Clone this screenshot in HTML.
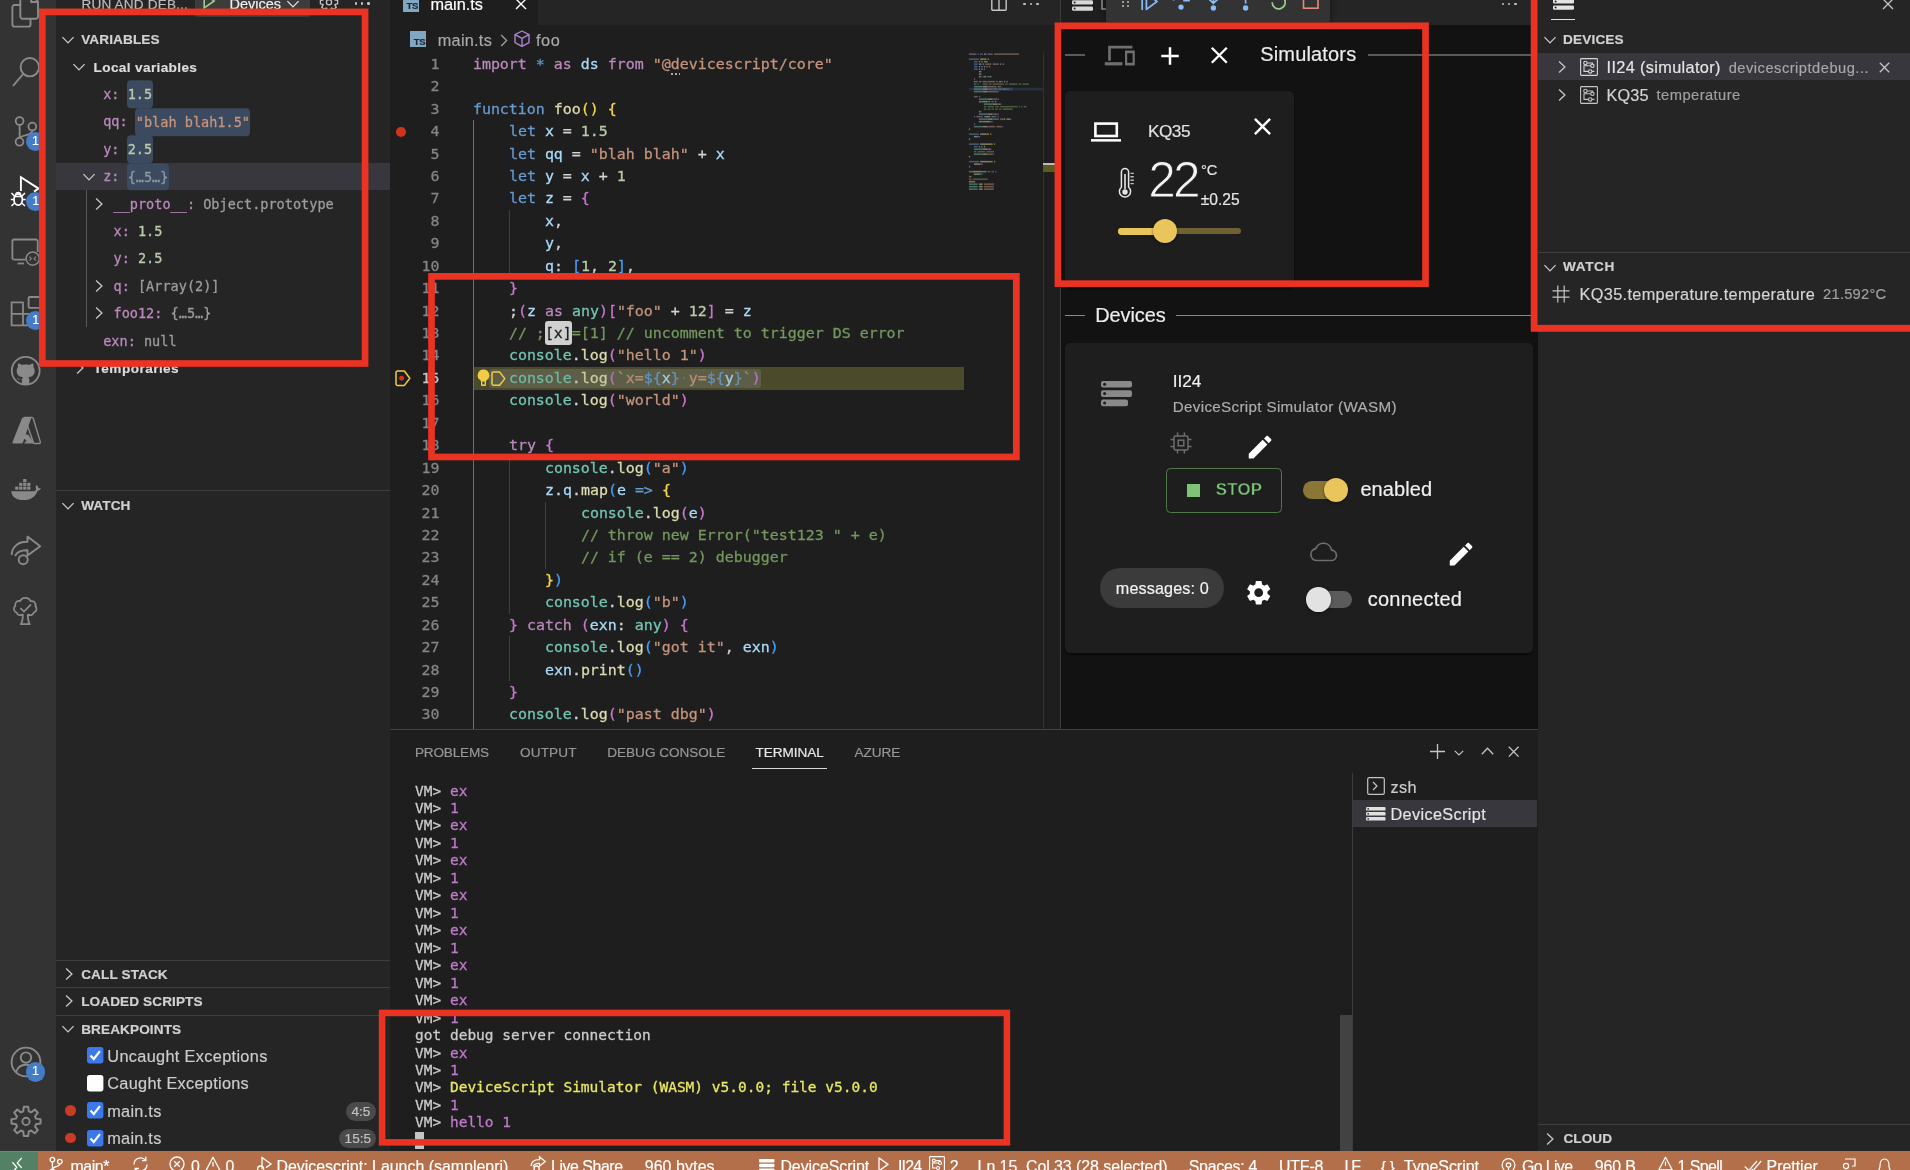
<!DOCTYPE html>
<html lang="en">
<head>
<meta charset="utf-8">
<title>DeviceScript - Visual Studio Code</title>
<style>
*{box-sizing:border-box;margin:0;padding:0}
html,body{width:1910px;height:1170px;overflow:hidden;background:#1e1e1e}
body{position:relative;font-family:"Liberation Sans",sans-serif;color:#ccc;font-size:16px;-webkit-text-stroke:.18px}
.abs{position:absolute}
.mono{font-family:"DejaVu Sans Mono","Liberation Mono",monospace;-webkit-text-stroke:.28px}
#activity{left:0;top:0;width:56px;height:1152px;background:#333333}
#sidebar{left:56px;top:0;width:334px;height:1152px;background:#252526}
#editor{left:390px;top:0;width:670px;height:729px;background:#1e1e1e}
#sim{left:1060px;top:0;width:478px;height:729px;background:#121212}
#right{left:1538px;top:0;width:372px;height:1152px;background:#252526}
#panel{left:390px;top:729px;width:1148px;height:423px;background:#1e1e1e;border-top:1px solid #414141}
#status{left:0;top:1151.4px;width:1910px;height:28px;background:#b36f4a;color:#fff;font-size:15.6px}
svg{display:block;overflow:visible}
.t{position:absolute;white-space:pre;line-height:1}
/* sidebar */
.hdr{font-weight:bold;font-size:13.6px;color:#d0d0d0;letter-spacing:.1px}
.sep{position:absolute;left:0;height:1px;background:#3e3e3f;width:334px}
.tv{font-size:13.55px;color:#bc89bd}
</style>
</head>
<body>
<div id="root" class="abs" style="left:0;top:0;width:1910px;height:1170px;overflow:hidden;will-change:transform;background:#1e1e1e">
<div id="activity" class="abs"><svg class="abs" style="left:0;top:0" width="56" height="1152" viewBox="0 0 56 1152" ><path d="M20.3,-6 V16.6 a2.2,2.2 0 0 0 2.2,2.2 H35.8 a2.2,2.2 0 0 0 2.2,-2.2 V1.5 L31.5,-5" fill="none" stroke="#8a8a8a" stroke-width="1.9"/><path d="M31.2,-5 V2 H38" fill="none" stroke="#8a8a8a" stroke-width="1.9"/><path d="M20.3,5 H14.6 a2.2,2.2 0 0 0 -2.2,2.2 V24.4 a2.2,2.2 0 0 0 2.2,2.2 H28.3 a2.2,2.2 0 0 0 2.2,-2.2 V18.8" fill="none" stroke="#8a8a8a" stroke-width="1.9"/><circle cx="29.8" cy="67.2" r="9.2" fill="none" stroke="#8a8a8a" stroke-width="1.9"/><path d="M23.2,74 L13,85.8" stroke="#8a8a8a" stroke-width="1.9" fill="none"/><circle cx="19.6" cy="121" r="3.9" fill="none" stroke="#8a8a8a" stroke-width="1.8"/><circle cx="32.3" cy="126.6" r="3.9" fill="none" stroke="#8a8a8a" stroke-width="1.8"/><circle cx="19.5" cy="141.8" r="3.9" fill="none" stroke="#8a8a8a" stroke-width="1.8"/><path d="M19.6,125 V137.8 M32.3,130.6 C32.3,136 24,134 19.8,137.6" fill="none" stroke="#8a8a8a" stroke-width="1.8"/><path d="M20.9,191 V177.3 L38.6,188.6 L34,191.6" fill="none" stroke="#ffffff" stroke-width="1.9"/><ellipse cx="18.2" cy="199.6" rx="4.2" ry="5.6" fill="none" stroke="#ffffff" stroke-width="1.8"/><path d="M14.6,196.6 H21.8 M14,199.6 H10.8 M22.4,199.6 H25.6 M14.4,196 L11.4,193 M22,196 L25,193 M14.4,203.2 L11.4,206 M22,203.2 L25,206 M15.6,194.2 a2.8,2.8 0 0 1 5.2,0" fill="none" stroke="#ffffff" stroke-width="1.5"/><path d="M25.5,259.7 H14.2 a1.8,1.8 0 0 1 -1.8,-1.8 V241.3 a1.8,1.8 0 0 1 1.8,-1.8 H35.9 a1.8,1.8 0 0 1 1.8,1.8 V252" fill="none" stroke="#8a8a8a" stroke-width="1.8"/><path d="M17.6,263.5 H24" stroke="#8a8a8a" stroke-width="1.8"/><circle cx="32.7" cy="258.6" r="6.6" fill="none" stroke="#8a8a8a" stroke-width="1.5"/><path d="M29.4,256.6 L31.4,258.6 L29.4,260.6 M36,256.6 L34,258.6 L36,260.6" fill="none" stroke="#8a8a8a" stroke-width="1.1"/><path d="M11.6,302.4 H23 V325.4 H11.6 Z M11.6,313.9 H34.6 V325.4 H23 M23,313.9" fill="none" stroke="#8a8a8a" stroke-width="1.8" stroke-linejoin="round"/><rect x="28.6" y="297" width="11.6" height="10.8" rx="1" fill="none" stroke="#8a8a8a" stroke-width="1.8"/><circle cx="25.7" cy="370.8" r="13.9" fill="none" stroke="#8a8a8a" stroke-width="1.8"/><path d="M21.9,384 v-4.2 c-3.6,0.9 -4.5,-1.6 -5,-2.4 c1,0.2 1.9,1.6 2.6,2 c1,0.5 2,0.3 2.6,-0.1 c0.1,-0.9 0.5,-1.5 1,-1.9 c-3.5,-0.5 -6.4,-2 -6.4,-6.6 c0,-1.5 0.5,-2.8 1.4,-3.8 c-0.2,-0.5 -0.6,-1.9 0.1,-3.6 c1.4,0 2.9,0.9 3.8,1.6 c1.2,-0.4 2.4,-0.5 3.7,-0.5 c1.300,0 2.500,0.1 3.700,0.500 c0.900,-0.700 2.400,-1.600 3.800,-1.600 c0.700,1.700 0.300,3.100 0.100,3.600 c0.900,1 1.400,2.300 1.400,3.800 c0,4.600 -2.900,6.100 -6.400,6.600 c0.600,0.500 1.100,1.500 1.100,3 v3.600 Z" fill="#8a8a8a"/><path d="M23.4,417.4 H31.4 L23,442.4 a1.6,1.6 0 0 1 -1.500,1.100 H13.600 a1.2,1.2 0 0 1 -1.100,-1.600 L21.900,418.500 a1.600,1.600 0 0 1 1.500,-1.100 Z" fill="#8a8a8a"/><path d="M31.8,417.4 H24.6 L33.4,442.4 a1.600,1.600 0 0 0 1.500,1.100 H39.2 a1.200,1.200 0 0 0 1.100,-1.600 L33.300,418.500 a1.600,1.600 0 0 0 -1.500,-1.100 Z" fill="none" stroke="#8a8a8a" stroke-width="1.4"/><path d="M28,434.400 H19.500 L26.500,440.800 L23.800,443.500 H34.500 Z" fill="#8a8a8a"/><path d="M10.8,491.200 H33.200 c1.600,0 2.600,-0.900 3,-2.300 c-0.800,-1.100 -0.700,-2.700 0.300,-3.900 c1.300,0.900 1.900,2.100 2,3.300 c0.900,-0.300 1.800,-0.200 2.500,0.300 c-0.700,1.300 -2,2 -3.400,2.100 c-2,5.700 -6.500,9.400 -14,9.400 c-7.500,0 -11.900,-3.500 -12.400,-8.900 Z" fill="#8a8a8a"/><rect x="15.2" y="486.6" width="3.200" height="3.100" fill="#8a8a8a"/><rect x="19.2" y="486.6" width="3.200" height="3.100" fill="#8a8a8a"/><rect x="23.2" y="486.6" width="3.200" height="3.100" fill="#8a8a8a"/><rect x="27.2" y="486.6" width="3.200" height="3.100" fill="#8a8a8a"/><rect x="19.2" y="482.8" width="3.200" height="3.100" fill="#8a8a8a"/><rect x="23.2" y="482.8" width="3.200" height="3.100" fill="#8a8a8a"/><rect x="27.2" y="482.8" width="3.200" height="3.100" fill="#8a8a8a"/><rect x="23.2" y="479" width="3.200" height="3.100" fill="#8a8a8a"/><rect x="23.600" y="479" width="2.400" height="2.600" fill="#8a8a8a"/><path d="M11.6,555 C12,546 19,541.500 27.500,541.800 V536.600 L40.200,546.200 L27.500,555.600 V550.200 C21.500,550 17.500,551 15,556" fill="none" stroke="#8a8a8a" stroke-width="1.9" stroke-linejoin="round"/><circle cx="23.200" cy="559.700" r="4.500" fill="none" stroke="#8a8a8a" stroke-width="1.900"/><path d="M22.800,614.600 c-2.200,1.200 -5.400,0.600 -6.200,-2 c-2.800,-1 -3.800,-4.600 -1.400,-6.800 c-0.600,-3.200 2.400,-5.600 5,-4.600 c1.400,-4.400 8.600,-4.400 10.400,0 c3,-0.800 5.600,1.800 4.800,4.800 c2.200,2.200 1.200,5.800 -1.600,6.600 c-0.800,2.600 -3.800,3.200 -6,2 c0,4 0.400,7.400 2,9.600 H20.800 c1.600,-2.200 2,-5.600 2,-9.600 Z" fill="none" stroke="#8a8a8a" stroke-width="1.8" stroke-linejoin="round"/><path d="M20.400,608.200 L24,611.600 L31,604.400" fill="none" stroke="#8a8a8a" stroke-width="1.800"/><circle cx="26" cy="1062" r="14.400" fill="none" stroke="#8a8a8a" stroke-width="1.900"/><circle cx="26" cy="1057.600" r="5.200" fill="none" stroke="#8a8a8a" stroke-width="1.900"/><path d="M16,1072.400 c1.600,-5.600 6,-7.600 10,-7.600 c4,0 8.400,2 10,7.600" fill="none" stroke="#8a8a8a" stroke-width="1.900"/><path d="M23.80,1106.87 L28.20,1106.87 L28.77,1111.38 L31.13,1112.35 L34.72,1109.57 L37.83,1112.68 L35.05,1116.27 L36.02,1118.63 L40.53,1119.20 L40.53,1123.60 L36.02,1124.17 L35.05,1126.53 L37.83,1130.12 L34.72,1133.23 L31.13,1130.45 L28.77,1131.42 L28.20,1135.93 L23.80,1135.93 L23.23,1131.42 L20.87,1130.45 L17.28,1133.23 L14.17,1130.12 L16.95,1126.53 L15.98,1124.17 L11.47,1123.60 L11.47,1119.20 L15.98,1118.63 L16.95,1116.27 L14.17,1112.68 L17.28,1109.57 L20.87,1112.35 L23.23,1111.38 Z" fill="none" stroke="#8a8a8a" stroke-width="2" stroke-linejoin="round"/><circle cx="26" cy="1121.4" r="3.600" fill="none" stroke="#8a8a8a" stroke-width="1.900"/></svg>
<div class="abs" style="left:25.900000000000002px;top:132.0px;width:19.4px;height:19.4px;border-radius:50%;background:#447cc8;color:#fff;font-size:12.500px;font-weight:normal;line-height:19.4px;text-align:center;z-index:2">1</div>
<div class="abs" style="left:26.000000000000004px;top:191.5px;width:19.4px;height:19.4px;border-radius:50%;background:#447cc8;color:#fff;font-size:12.500px;font-weight:normal;line-height:19.4px;text-align:center;z-index:2">1</div>
<div class="abs" style="left:26.000000000000004px;top:311.1px;width:19.4px;height:19.4px;border-radius:50%;background:#447cc8;color:#fff;font-size:12.500px;font-weight:normal;line-height:19.4px;text-align:center;z-index:2">1</div>
<div class="abs" style="left:25.900000000000002px;top:1062.3px;width:19.4px;height:19.4px;border-radius:50%;background:#447cc8;color:#fff;font-size:12.500px;font-weight:normal;line-height:19.4px;text-align:center;z-index:2">1</div></div>
<div id="sidebar" class="abs"><div class="t " style="left:25.5px;top:4.5px;transform:translateY(-50%);font-size:13.600px;color:#bbbbbb;letter-spacing:.16px">RUN AND DEB...</div>
<div class="abs" style="left:138.8px;top:-10px;width:114.8px;height:27.4px;background:#3c3c3c;border-radius:2px"></div>
<svg class="abs" style="left:147px;top:-6px" width="13" height="15" viewBox="0 0 13 15"><path d="M1.2,0 L11.2,7 L1.2,14 Z" fill="none" stroke="#99cf8c" stroke-width="1.6"/></svg>
<div class="t " style="left:173.5px;top:3.5px;transform:translateY(-50%);font-size:14.500px;color:#f0f0f0">Devices</div>
<svg class="abs" style="left:229.60000000000002px;top:-1.4px" width="14" height="10" viewBox="-7 -5 14 10"><path d="M-5.6,-2.9 L0,2.9 L5.6,-2.9" fill="none" stroke="#e0e0e0" stroke-width="1.35"/></svg>
<svg class="abs" style="left:262.5px;top:-8px" width="20" height="20" viewBox="0 0 20 20"><path d="M8.25,1.58 L11.75,1.58 L12.13,4.17 L12.76,4.42 L14.86,2.87 L17.33,5.34 L15.78,7.44 L16.03,8.07 L18.62,8.45 L18.62,11.95 L16.03,12.33 L15.78,12.96 L17.33,15.06 L14.86,17.53 L12.76,15.98 L12.13,16.23 L11.75,18.82 L8.25,18.82 L7.87,16.23 L7.24,15.98 L5.14,17.53 L2.67,15.06 L4.22,12.96 L3.97,12.33 L1.38,11.95 L1.38,8.45 L3.97,8.07 L4.22,7.44 L2.67,5.34 L5.14,2.87 L7.24,4.42 L7.87,4.17 Z" fill="none" stroke="#c5c5c5" stroke-width="1.3" stroke-linejoin="round"/><circle cx="10" cy="10.2" r="2.6" fill="none" stroke="#c5c5c5" stroke-width="1.3"/></svg>
<div class="abs" style="left:298.5px;top:2.2px;width:2.4px;height:2.4px;border-radius:50%;background:#c5c5c5"></div>
<div class="abs" style="left:304.9px;top:2.2px;width:2.4px;height:2.4px;border-radius:50%;background:#c5c5c5"></div>
<div class="abs" style="left:311.3px;top:2.2px;width:2.4px;height:2.4px;border-radius:50%;background:#c5c5c5"></div>
<svg class="abs" style="left:5.400000000000006px;top:34.8px" width="14" height="10" viewBox="-7 -5 14 10"><path d="M-5.6,-2.9 L0,2.9 L5.6,-2.9" fill="none" stroke="#c5c5c5" stroke-width="1.35"/></svg>
<div class="t hdr" style="left:25.2px;top:40.2px;transform:translateY(-50%);">VARIABLES</div>
<svg class="abs" style="left:16px;top:62px" width="14" height="10" viewBox="-7 -5 14 10"><path d="M-5.6,-2.9 L0,2.9 L5.6,-2.9" fill="none" stroke="#c5c5c5" stroke-width="1.35"/></svg>
<div class="t hdr" style="left:37.6px;top:67.5px;transform:translateY(-50%);color:#dcdcdc;letter-spacing:.36px">Local variables</div>
<div class="abs" style="left:0;top:163px;width:334px;height:26.8px;background:#37373d"></div>
<div class="abs" style="left:30.200000000000003px;top:189.8px;width:1px;height:137.4px;background:#5a5a5a"></div>
<div class="t mono tv" style="left:47.2px;top:94.9px;transform:translateY(-50%);"><span>x:</span> <span style="color:#bacdab;background:#3b4a5e;border-radius:4px;padding:5.6px 0.4px 6.2px 0.4px;margin:0 -0.4px">1.5</span></div>
<div class="t mono tv" style="left:47.2px;top:122.4px;transform:translateY(-50%);"><span>qq:</span> <span style="color:#c5947c;background:#3b4a5e;border-radius:4px;padding:5.6px 0.4px 6.2px 0.4px;margin:0 -0.4px">"blah blah1.5"</span></div>
<div class="t mono tv" style="left:47.2px;top:149.9px;transform:translateY(-50%);"><span>y:</span> <span style="color:#bacdab;background:#3b4a5e;border-radius:4px;padding:5.6px 0.4px 6.2px 0.4px;margin:0 -0.4px">2.5</span></div>
<svg class="abs" style="left:26px;top:171.9px" width="14" height="10" viewBox="-7 -5 14 10"><path d="M-5.6,-2.9 L0,2.9 L5.6,-2.9" fill="none" stroke="#c5c5c5" stroke-width="1.35"/></svg>
<div class="t mono tv" style="left:47.2px;top:177.2px;transform:translateY(-50%);"><span>z:</span> <span style="color:#8f98a3;background:#3b4a5e;border-radius:4px;padding:5.6px 0.4px 6.2px 0.4px;margin:0 -0.4px">{…5…}</span></div>
<svg class="abs" style="left:38.3px;top:196.8px" width="10" height="14" viewBox="-5 -7 10 14"><path d="M-2.9,-5.6 L2.9,0 L-2.9,5.6" fill="none" stroke="#c5c5c5" stroke-width="1.35"/></svg>
<div class="t mono tv" style="left:57.5px;top:204.7px;transform:translateY(-50%);"><span>__proto__:</span> <span style="color:#9d9d9d;">Object.prototype</span></div>
<div class="t mono tv" style="left:57.5px;top:231.9px;transform:translateY(-50%);"><span>x:</span> <span style="color:#bacdab;">1.5</span></div>
<div class="t mono tv" style="left:57.5px;top:259.4px;transform:translateY(-50%);"><span>y:</span> <span style="color:#bacdab;">2.5</span></div>
<svg class="abs" style="left:38.3px;top:279px" width="10" height="14" viewBox="-5 -7 10 14"><path d="M-2.9,-5.6 L2.9,0 L-2.9,5.6" fill="none" stroke="#c5c5c5" stroke-width="1.35"/></svg>
<div class="t mono tv" style="left:57.5px;top:286.9px;transform:translateY(-50%);"><span>q:</span> <span style="color:#9d9d9d;">[Array(2)]</span></div>
<svg class="abs" style="left:38.3px;top:306.3px" width="10" height="14" viewBox="-5 -7 10 14"><path d="M-2.9,-5.6 L2.9,0 L-2.9,5.6" fill="none" stroke="#c5c5c5" stroke-width="1.35"/></svg>
<div class="t mono tv" style="left:57.5px;top:314.2px;transform:translateY(-50%);"><span>foo12:</span> <span style="color:#9d9d9d;">{…5…}</span></div>
<div class="t mono tv" style="left:47.2px;top:341.6px;transform:translateY(-50%);"><span>exn:</span> <span style="color:#9d9d9d;">null</span></div>
<svg class="abs" style="left:19.299999999999997px;top:361px" width="10" height="14" viewBox="-5 -7 10 14"><path d="M-2.9,-5.6 L2.9,0 L-2.9,5.6" fill="none" stroke="#c5c5c5" stroke-width="1.35"/></svg>
<div class="t hdr" style="left:37.6px;top:368.9px;transform:translateY(-50%);color:#dcdcdc;letter-spacing:.45px">Temporaries</div>
<div class="sep" style="top:490px"></div>
<svg class="abs" style="left:5.400000000000006px;top:500.6px" width="14" height="10" viewBox="-7 -5 14 10"><path d="M-5.6,-2.9 L0,2.9 L5.6,-2.9" fill="none" stroke="#c5c5c5" stroke-width="1.35"/></svg>
<div class="t hdr" style="left:25.2px;top:506.1px;transform:translateY(-50%);">WATCH</div>
<div class="sep" style="top:960px"></div>
<svg class="abs" style="left:7.799999999999997px;top:967.2px" width="10" height="14" viewBox="-5 -7 10 14"><path d="M-2.9,-5.6 L2.9,0 L-2.9,5.6" fill="none" stroke="#c5c5c5" stroke-width="1.35"/></svg>
<div class="t hdr" style="left:25.2px;top:975.1px;transform:translateY(-50%);">CALL STACK</div>
<div class="sep" style="top:987.4px"></div>
<svg class="abs" style="left:7.799999999999997px;top:994.4px" width="10" height="14" viewBox="-5 -7 10 14"><path d="M-2.9,-5.6 L2.9,0 L-2.9,5.6" fill="none" stroke="#c5c5c5" stroke-width="1.35"/></svg>
<div class="t hdr" style="left:25.2px;top:1002.3px;transform:translateY(-50%);">LOADED SCRIPTS</div>
<div class="sep" style="top:1015px"></div>
<svg class="abs" style="left:5.400000000000006px;top:1024.4px" width="14" height="10" viewBox="-7 -5 14 10"><path d="M-5.6,-2.9 L0,2.9 L5.6,-2.9" fill="none" stroke="#c5c5c5" stroke-width="1.35"/></svg>
<div class="t hdr" style="left:25.2px;top:1029.8px;transform:translateY(-50%);">BREAKPOINTS</div>
<svg class="abs" style="left:31.000000000000004px;top:1047.1px" width="16.4" height="16.4" viewBox="0 0 16.4 16.4"><rect x="0" y="0" width="16.4" height="16.4" rx="2.7" fill="#3d78ea"/><path d="M3.500,8.600 L6.800,12 L12.900,4.200" fill="none" stroke="#fff" stroke-width="2.200"/></svg>
<div class="t " style="left:51.3px;top:1055.5px;transform:translateY(-50%);font-size:16.3px;color:#cccccc;letter-spacing:.34px">Uncaught Exceptions</div>
<svg class="abs" style="left:31.000000000000004px;top:1074.7px" width="16.4" height="16.4" viewBox="0 0 16.4 16.4"><rect x="0" y="0" width="16.4" height="16.4" rx="2.700" fill="#fefefe"/></svg>
<div class="t " style="left:51.3px;top:1083.1px;transform:translateY(-50%);font-size:16.3px;color:#cccccc;letter-spacing:.3px">Caught Exceptions</div>
<div class="abs" style="left:9.200000000000006px;top:1105.3px;width:10.400px;height:10.400px;border-radius:50%;background:#c93b27"></div>
<svg class="abs" style="left:31.000000000000004px;top:1102.3px" width="16.4" height="16.4" viewBox="0 0 16.4 16.4"><rect x="0" y="0" width="16.4" height="16.4" rx="2.7" fill="#3d78ea"/><path d="M3.500,8.600 L6.800,12 L12.900,4.200" fill="none" stroke="#fff" stroke-width="2.200"/></svg>
<div class="t " style="left:51.3px;top:1110.7px;transform:translateY(-50%);font-size:16.3px;color:#cccccc;letter-spacing:.25px">main.ts</div>
<div class="abs" style="left:289.6px;top:1101.6px;width:30.799999999999955px;height:19px;border-radius:9.5px;background:#4a4a4a;color:#c2c2c2;font-size:13.6px;line-height:19px;text-align:center">4:5</div>
<div class="abs" style="left:9.200000000000006px;top:1132.7px;width:10.400px;height:10.400px;border-radius:50%;background:#c93b27"></div>
<svg class="abs" style="left:31.000000000000004px;top:1129.7px" width="16.4" height="16.4" viewBox="0 0 16.4 16.4"><rect x="0" y="0" width="16.4" height="16.4" rx="2.7" fill="#3d78ea"/><path d="M3.500,8.600 L6.800,12 L12.900,4.200" fill="none" stroke="#fff" stroke-width="2.200"/></svg>
<div class="t " style="left:51.3px;top:1138.1px;transform:translateY(-50%);font-size:16.3px;color:#cccccc;letter-spacing:.25px">main.ts</div>
<div class="abs" style="left:283.3px;top:1129.0px;width:37.099999999999966px;height:19px;border-radius:9.5px;background:#4a4a4a;color:#c2c2c2;font-size:13.6px;line-height:19px;text-align:center">15:5</div></div>
<div id="editor" class="abs"><div class="abs" style="left:0;top:0;width:670px;height:25.4px;background:#252526"></div>
<div class="abs" style="left:0;top:0;width:148.4px;height:25.4px;background:#1e1e1e"></div>
<div class="abs" style="left:12.600000000000023px;top:-4.6px;width:16.4px;height:16.4px;background:#82a7c2;color:#1f2a33;font-size:9.5px;font-weight:bold;line-height:22.4px;text-align:right;padding-right:1px;letter-spacing:-.3px;overflow:hidden">TS</div>
<div class="t" style="left:40.39999999999998px;top:-4.2px;font-size:16.3px;color:#fff">main.ts</div>
<svg class="abs" style="left:125.10000000000002px;top:-1.6px" width="12" height="12" viewBox="-6 -6 12 12"><path d="M-5,-5 L5,5 M5,-5 L-5,5" stroke="#fff" stroke-width="1.4"/></svg>
<svg class="abs" style="left:601px;top:-6px" width="16" height="17" viewBox="0 0 16 17"><rect x="0.8" y="0.8" width="14.4" height="15.4" rx="1" fill="none" stroke="#c5c5c5" stroke-width="1.4"/><path d="M8,0.8 V16" stroke="#c5c5c5" stroke-width="1.4"/></svg>
<div class="abs" style="left:633.4px;top:2.6px;width:2.4px;height:2.4px;border-radius:50%;background:#c5c5c5"></div>
<div class="abs" style="left:639.8px;top:2.6px;width:2.4px;height:2.4px;border-radius:50%;background:#c5c5c5"></div>
<div class="abs" style="left:646.2px;top:2.6px;width:2.4px;height:2.4px;border-radius:50%;background:#c5c5c5"></div>
<div class="abs" style="left:20px;top:31px;width:16.4px;height:16px;background:#82a7c2;color:#1f2a33;font-size:9.5px;font-weight:bold;line-height:22px;text-align:right;padding-right:1px;letter-spacing:-.3px;overflow:hidden">TS</div>
<div class="t" style="left:47.80000000000001px;top:32.200px;font-size:16.300px;color:#a9a9a9;letter-spacing:.25px">main.ts</div>
<svg class="abs" style="left:109.60000000000002px;top:34px" width="8" height="13" viewBox="0 0 8 13"><path d="M1.2,1 L6.6,6.5 L1.2,12" fill="none" stroke="#a0a0a0" stroke-width="1.3"/></svg>
<svg class="abs" style="left:124.39999999999998px;top:30.4px" width="16" height="17.4" viewBox="0 0 16 17.4"><path d="M8,1 L15,4.6 V12.6 L8,16.4 L1,12.6 V4.6 Z M1,4.6 L8,8.4 L15,4.6 M8,8.4 V16.4" fill="none" stroke="#aa82d2" stroke-width="1.4" stroke-linejoin="round"/></svg>
<div class="t" style="left:146px;top:32.200px;font-size:16.300px;color:#a9a9a9;letter-spacing:.6px">foo</div>
<div class="abs" style="left:82.89999999999998px;top:367.3px;width:491.1px;height:22.43px;background:#4b4b2b"></div>
<div class="abs" style="left:98.60000000000002px;top:368.7px;width:272.4px;height:19.63px;background:#5d5e47;border-radius:3px"></div>
<div class="abs" style="left:83.2px;top:120.2px;width:1px;height:628.0px;background:#707070"></div>
<div class="abs" style="left:119.2px;top:209.9px;width:1px;height:67.3px;background:#404040"></div>
<div class="abs" style="left:119.2px;top:456.6px;width:1px;height:157.0px;background:#404040"></div>
<div class="abs" style="left:119.2px;top:636.1px;width:1px;height:44.9px;background:#404040"></div>
<div class="abs" style="left:155.2px;top:501.5px;width:1px;height:67.3px;background:#404040"></div>
<div class="t mono" style="left:10px;width:39.6px;text-align:right;top:52.9px;line-height:22.43px;font-size:14.95px;color:#858585">1</div>
<div class="t mono" style="left:82.9px;top:52.90px;line-height:22.43px;font-size:14.95px;color:#d4d4d4"><span style="color:#bc89bd">import</span> <span style="color:#679ad1">*</span> <span style="color:#bc89bd">as</span> <span style="color:#aadafa">ds</span> <span style="color:#bc89bd">from</span> <span style="color:#c5947c">"@devicescript/core"</span></div>
<div class="t mono" style="left:10px;width:39.6px;text-align:right;top:75.33px;line-height:22.43px;font-size:14.95px;color:#858585">2</div>
<div class="t mono" style="left:10px;width:39.6px;text-align:right;top:97.75999999999999px;line-height:22.43px;font-size:14.95px;color:#858585">3</div>
<div class="t mono" style="left:82.9px;top:97.76px;line-height:22.43px;font-size:14.95px;color:#d4d4d4"><span style="color:#679ad1">function</span> <span style="color:#dcdcaf">foo</span><span style="color:#f9d849">()</span> <span style="color:#f9d849">{</span></div>
<div class="t mono" style="left:10px;width:39.6px;text-align:right;top:120.19px;line-height:22.43px;font-size:14.95px;color:#858585">4</div>
<div class="t mono" style="left:118.9px;top:120.19px;line-height:22.43px;font-size:14.95px;color:#d4d4d4"><span style="color:#679ad1">let</span> <span style="color:#aadafa">x</span><span style="color:#d4d4d4"> = </span><span style="color:#bacdab">1.5</span></div>
<div class="t mono" style="left:10px;width:39.6px;text-align:right;top:142.62px;line-height:22.43px;font-size:14.95px;color:#858585">5</div>
<div class="t mono" style="left:118.9px;top:142.62px;line-height:22.43px;font-size:14.95px;color:#d4d4d4"><span style="color:#679ad1">let</span> <span style="color:#aadafa">qq</span><span style="color:#d4d4d4"> = </span><span style="color:#c5947c">"blah blah"</span><span style="color:#d4d4d4"> + </span><span style="color:#aadafa">x</span></div>
<div class="t mono" style="left:10px;width:39.6px;text-align:right;top:165.05px;line-height:22.43px;font-size:14.95px;color:#858585">6</div>
<div class="t mono" style="left:118.9px;top:165.05px;line-height:22.43px;font-size:14.95px;color:#d4d4d4"><span style="color:#679ad1">let</span> <span style="color:#aadafa">y</span><span style="color:#d4d4d4"> = </span><span style="color:#aadafa">x</span><span style="color:#d4d4d4"> + </span><span style="color:#bacdab">1</span></div>
<div class="t mono" style="left:10px;width:39.6px;text-align:right;top:187.48px;line-height:22.43px;font-size:14.95px;color:#858585">7</div>
<div class="t mono" style="left:118.9px;top:187.48px;line-height:22.43px;font-size:14.95px;color:#d4d4d4"><span style="color:#679ad1">let</span> <span style="color:#aadafa">z</span><span style="color:#d4d4d4"> = </span><span style="color:#cc76d1">{</span></div>
<div class="t mono" style="left:10px;width:39.6px;text-align:right;top:209.91px;line-height:22.43px;font-size:14.95px;color:#858585">8</div>
<div class="t mono" style="left:154.9px;top:209.91px;line-height:22.43px;font-size:14.95px;color:#d4d4d4"><span style="color:#aadafa">x</span><span style="color:#d4d4d4">,</span></div>
<div class="t mono" style="left:10px;width:39.6px;text-align:right;top:232.34px;line-height:22.43px;font-size:14.95px;color:#858585">9</div>
<div class="t mono" style="left:154.9px;top:232.34px;line-height:22.43px;font-size:14.95px;color:#d4d4d4"><span style="color:#aadafa">y</span><span style="color:#d4d4d4">,</span></div>
<div class="t mono" style="left:10px;width:39.6px;text-align:right;top:254.77px;line-height:22.43px;font-size:14.95px;color:#858585">10</div>
<div class="t mono" style="left:154.9px;top:254.77px;line-height:22.43px;font-size:14.95px;color:#d4d4d4"><span style="color:#aadafa">q</span><span style="color:#d4d4d4">: </span><span style="color:#4a9df8">[</span><span style="color:#bacdab">1</span><span style="color:#d4d4d4">, </span><span style="color:#bacdab">2</span><span style="color:#4a9df8">]</span><span style="color:#d4d4d4">,</span></div>
<div class="t mono" style="left:10px;width:39.6px;text-align:right;top:277.2px;line-height:22.43px;font-size:14.95px;color:#858585">11</div>
<div class="t mono" style="left:118.9px;top:277.20px;line-height:22.43px;font-size:14.95px;color:#d4d4d4"><span style="color:#cc76d1">}</span></div>
<div class="t mono" style="left:10px;width:39.6px;text-align:right;top:299.63px;line-height:22.43px;font-size:14.95px;color:#858585">12</div>
<div class="t mono" style="left:118.9px;top:299.63px;line-height:22.43px;font-size:14.95px;color:#d4d4d4"><span style="color:#d4d4d4">;</span><span style="color:#cc76d1">(</span><span style="color:#aadafa">z</span> <span style="color:#bc89bd">as</span> <span style="color:#71c6b1">any</span><span style="color:#cc76d1">)</span><span style="color:#cc76d1">[</span><span style="color:#c5947c">"foo"</span><span style="color:#d4d4d4"> + </span><span style="color:#bacdab">12</span><span style="color:#cc76d1">]</span><span style="color:#d4d4d4"> = </span><span style="color:#aadafa">z</span></div>
<div class="t mono" style="left:10px;width:39.6px;text-align:right;top:322.05999999999995px;line-height:22.43px;font-size:14.95px;color:#858585">13</div>
<div class="t mono" style="left:118.9px;top:322.06px;line-height:22.43px;font-size:14.95px;color:#d4d4d4"><span style="color:#74985d">// ;</span><span style="color:#1e1e1e;background:#d0d0d0;border-radius:3px;padding:3.2px 0 3.4px 0">[x]</span><span style="color:#74985d">=[1] // uncomment to trigger DS error</span></div>
<div class="t mono" style="left:10px;width:39.6px;text-align:right;top:344.48999999999995px;line-height:22.43px;font-size:14.95px;color:#858585">14</div>
<div class="t mono" style="left:118.9px;top:344.49px;line-height:22.43px;font-size:14.95px;color:#d4d4d4"><span style="color:#71c6b1">console</span><span style="color:#d4d4d4">.</span><span style="color:#dcdcaf">log</span><span style="color:#cc76d1">(</span><span style="color:#c5947c">"hello 1"</span><span style="color:#cc76d1">)</span></div>
<div class="t mono" style="left:10px;width:39.6px;text-align:right;top:366.91999999999996px;line-height:22.43px;font-size:14.95px;color:#c6c6c6">15</div>
<div class="t mono" style="left:118.9px;top:366.92px;line-height:22.43px;font-size:14.95px;color:#d4d4d4;opacity:.86"><span style="color:#71c6b1">console</span><span style="color:#d4d4d4">.</span><span style="color:#dcdcaf">log</span><span style="color:#cc76d1">(</span><span style="color:#c5947c">`x=</span><span style="color:#679ad1">${</span><span style="color:#aadafa">x</span><span style="color:#679ad1">}</span><span style="color:#70705a">·</span><span style="color:#c5947c">y=</span><span style="color:#679ad1">${</span><span style="color:#aadafa">y</span><span style="color:#679ad1">}</span><span style="color:#c5947c">`</span><span style="color:#cc76d1">)</span></div>
<div class="t mono" style="left:10px;width:39.6px;text-align:right;top:389.34999999999997px;line-height:22.43px;font-size:14.95px;color:#858585">16</div>
<div class="t mono" style="left:118.9px;top:389.35px;line-height:22.43px;font-size:14.95px;color:#d4d4d4"><span style="color:#71c6b1">console</span><span style="color:#d4d4d4">.</span><span style="color:#dcdcaf">log</span><span style="color:#cc76d1">(</span><span style="color:#c5947c">"world"</span><span style="color:#cc76d1">)</span></div>
<div class="t mono" style="left:10px;width:39.6px;text-align:right;top:411.78px;line-height:22.43px;font-size:14.95px;color:#858585">17</div>
<div class="t mono" style="left:10px;width:39.6px;text-align:right;top:434.21px;line-height:22.43px;font-size:14.95px;color:#858585">18</div>
<div class="t mono" style="left:118.9px;top:434.21px;line-height:22.43px;font-size:14.95px;color:#d4d4d4"><span style="color:#bc89bd">try</span> <span style="color:#cc76d1">{</span></div>
<div class="t mono" style="left:10px;width:39.6px;text-align:right;top:456.64px;line-height:22.43px;font-size:14.95px;color:#858585">19</div>
<div class="t mono" style="left:154.9px;top:456.64px;line-height:22.43px;font-size:14.95px;color:#d4d4d4"><span style="color:#71c6b1">console</span><span style="color:#d4d4d4">.</span><span style="color:#dcdcaf">log</span><span style="color:#4a9df8">(</span><span style="color:#c5947c">"a"</span><span style="color:#4a9df8">)</span></div>
<div class="t mono" style="left:10px;width:39.6px;text-align:right;top:479.07px;line-height:22.43px;font-size:14.95px;color:#858585">20</div>
<div class="t mono" style="left:154.9px;top:479.07px;line-height:22.43px;font-size:14.95px;color:#d4d4d4"><span style="color:#aadafa">z</span><span style="color:#d4d4d4">.</span><span style="color:#aadafa">q</span><span style="color:#d4d4d4">.</span><span style="color:#dcdcaf">map</span><span style="color:#4a9df8">(</span><span style="color:#aadafa">e</span> <span style="color:#679ad1">=&gt;</span> <span style="color:#f9d849">{</span></div>
<div class="t mono" style="left:10px;width:39.6px;text-align:right;top:501.5px;line-height:22.43px;font-size:14.95px;color:#858585">21</div>
<div class="t mono" style="left:190.9px;top:501.50px;line-height:22.43px;font-size:14.95px;color:#d4d4d4"><span style="color:#71c6b1">console</span><span style="color:#d4d4d4">.</span><span style="color:#dcdcaf">log</span><span style="color:#cc76d1">(</span><span style="color:#aadafa">e</span><span style="color:#cc76d1">)</span></div>
<div class="t mono" style="left:10px;width:39.6px;text-align:right;top:523.93px;line-height:22.43px;font-size:14.95px;color:#858585">22</div>
<div class="t mono" style="left:190.9px;top:523.93px;line-height:22.43px;font-size:14.95px;color:#d4d4d4"><span style="color:#74985d">// throw new Error("test123 " + e)</span></div>
<div class="t mono" style="left:10px;width:39.6px;text-align:right;top:546.36px;line-height:22.43px;font-size:14.95px;color:#858585">23</div>
<div class="t mono" style="left:190.9px;top:546.36px;line-height:22.43px;font-size:14.95px;color:#d4d4d4"><span style="color:#74985d">// if (e == 2) debugger</span></div>
<div class="t mono" style="left:10px;width:39.6px;text-align:right;top:568.79px;line-height:22.43px;font-size:14.95px;color:#858585">24</div>
<div class="t mono" style="left:154.9px;top:568.79px;line-height:22.43px;font-size:14.95px;color:#d4d4d4"><span style="color:#f9d849">}</span><span style="color:#4a9df8">)</span></div>
<div class="t mono" style="left:10px;width:39.6px;text-align:right;top:591.2199999999999px;line-height:22.43px;font-size:14.95px;color:#858585">25</div>
<div class="t mono" style="left:154.9px;top:591.22px;line-height:22.43px;font-size:14.95px;color:#d4d4d4"><span style="color:#71c6b1">console</span><span style="color:#d4d4d4">.</span><span style="color:#dcdcaf">log</span><span style="color:#4a9df8">(</span><span style="color:#c5947c">"b"</span><span style="color:#4a9df8">)</span></div>
<div class="t mono" style="left:10px;width:39.6px;text-align:right;top:613.65px;line-height:22.43px;font-size:14.95px;color:#858585">26</div>
<div class="t mono" style="left:118.9px;top:613.65px;line-height:22.43px;font-size:14.95px;color:#d4d4d4"><span style="color:#cc76d1">}</span> <span style="color:#bc89bd">catch</span> <span style="color:#cc76d1">(</span><span style="color:#aadafa">exn</span><span style="color:#d4d4d4">: </span><span style="color:#71c6b1">any</span><span style="color:#cc76d1">)</span> <span style="color:#cc76d1">{</span></div>
<div class="t mono" style="left:10px;width:39.6px;text-align:right;top:636.0799999999999px;line-height:22.43px;font-size:14.95px;color:#858585">27</div>
<div class="t mono" style="left:154.9px;top:636.08px;line-height:22.43px;font-size:14.95px;color:#d4d4d4"><span style="color:#71c6b1">console</span><span style="color:#d4d4d4">.</span><span style="color:#dcdcaf">log</span><span style="color:#4a9df8">(</span><span style="color:#c5947c">"got it"</span><span style="color:#d4d4d4">, </span><span style="color:#aadafa">exn</span><span style="color:#4a9df8">)</span></div>
<div class="t mono" style="left:10px;width:39.6px;text-align:right;top:658.51px;line-height:22.43px;font-size:14.95px;color:#858585">28</div>
<div class="t mono" style="left:154.9px;top:658.51px;line-height:22.43px;font-size:14.95px;color:#d4d4d4"><span style="color:#aadafa">exn</span><span style="color:#d4d4d4">.</span><span style="color:#dcdcaf">print</span><span style="color:#4a9df8">()</span></div>
<div class="t mono" style="left:10px;width:39.6px;text-align:right;top:680.9399999999999px;line-height:22.43px;font-size:14.95px;color:#858585">29</div>
<div class="t mono" style="left:118.9px;top:680.94px;line-height:22.43px;font-size:14.95px;color:#d4d4d4"><span style="color:#cc76d1">}</span></div>
<div class="t mono" style="left:10px;width:39.6px;text-align:right;top:703.37px;line-height:22.43px;font-size:14.95px;color:#858585">30</div>
<div class="t mono" style="left:118.9px;top:703.37px;line-height:22.43px;font-size:14.95px;color:#d4d4d4"><span style="color:#71c6b1">console</span><span style="color:#d4d4d4">.</span><span style="color:#dcdcaf">log</span><span style="color:#cc76d1">(</span><span style="color:#c5947c">"past dbg"</span><span style="color:#cc76d1">)</span></div>
<div class="abs" style="left:281.4px;top:72.8px;width:1.8px;height:1.8px;background:#aaa"></div>
<div class="abs" style="left:285.0px;top:72.8px;width:1.8px;height:1.8px;background:#aaa"></div>
<div class="abs" style="left:288.6px;top:72.8px;width:1.8px;height:1.8px;background:#aaa"></div>
<div class="abs" style="left:6.399999999999977px;top:126.80000000000001px;width:10px;height:10px;border-radius:50%;background:#d2331f"></div>
<svg class="abs" style="left:4.600000000000023px;top:370.315px" width="16" height="16.4" viewBox="0 0 16 16.4"><path d="M1,2.6 a1.6,1.6 0 0 1 1.6,-1.6 H9.4 L14.8,8.2 L9.4,15.4 H2.6 a1.6,1.6 0 0 1 -1.6,-1.6 Z" fill="none" stroke="#f3cb45" stroke-width="1.5" stroke-linejoin="round"/><circle cx="6.6" cy="8.2" r="2.5" fill="#d2331f"/></svg>
<svg class="abs" style="left:86.60000000000002px;top:369.115px" width="13" height="18" viewBox="0 0 13 18"><path d="M6.500,0.600 a5.800,5.800 0 0 0 -3.400,10.500 c0.600,0.500 0.900,1.100 0.900,1.800 v3.200 a0.900,0.900 0 0 0 0.900,0.900 h3.200 a0.900,0.900 0 0 0 0.900,-0.900 v-3.200 c0,-0.700 0.300,-1.300 0.900,-1.800 a5.800,5.800 0 0 0 -3.400,-10.500 Z" fill="#f3cb45"/><rect x="5.3" y="12.600" width="2.400" height="2.800" fill="#4b4b2b"/></svg>
<svg class="abs" style="left:101.19999999999999px;top:370.91499999999996px" width="15" height="15.2" viewBox="0 0 15 15.2"><path d="M1,2.400 a1.400,1.400 0 0 1 1.400,-1.400 H8.600 L13.800,7.600 L8.600,14.200 H2.400 a1.400,1.400 0 0 1 -1.400,-1.400 Z" fill="none" stroke="#f3cb45" stroke-width="1.500" stroke-linejoin="round"/></svg>
<svg class="abs" style="left:0;top:0;opacity:.5" width="670" height="300" viewBox="0 0 670 300"><rect x="578.9" y="87.80" width="73.7" height="2.6" fill="#2c4566"/><rect x="583.9" y="87.80" width="39.0" height="2.6" fill="#3f6ea8"/><rect x="578.90" y="53.40" width="7.50" height="1.5" fill="#bc89bd"/><rect x="587.65" y="53.40" width="1.25" height="1.5" fill="#679ad1"/><rect x="590.15" y="53.40" width="2.50" height="1.5" fill="#bc89bd"/><rect x="593.90" y="53.40" width="2.50" height="1.5" fill="#aadafa"/><rect x="597.65" y="53.40" width="5.00" height="1.5" fill="#bc89bd"/><rect x="603.90" y="53.40" width="25.00" height="1.5" fill="#c5947c"/><rect x="578.90" y="58.40" width="10.00" height="1.5" fill="#679ad1"/><rect x="590.15" y="58.40" width="3.75" height="1.5" fill="#dcdcaf"/><rect x="593.90" y="58.40" width="2.50" height="1.5" fill="#f9d849"/><rect x="597.65" y="58.40" width="1.25" height="1.5" fill="#f9d849"/><rect x="583.90" y="60.90" width="3.75" height="1.5" fill="#679ad1"/><rect x="588.90" y="60.90" width="1.25" height="1.5" fill="#aadafa"/><rect x="591.40" y="60.90" width="1.25" height="1.5" fill="#d4d4d4"/><rect x="593.90" y="60.90" width="3.75" height="1.5" fill="#bacdab"/><rect x="583.90" y="63.40" width="3.75" height="1.5" fill="#679ad1"/><rect x="588.90" y="63.40" width="2.50" height="1.5" fill="#aadafa"/><rect x="592.65" y="63.40" width="1.25" height="1.5" fill="#d4d4d4"/><rect x="595.15" y="63.40" width="6.25" height="1.5" fill="#c5947c"/><rect x="602.65" y="63.40" width="6.25" height="1.5" fill="#c5947c"/><rect x="610.15" y="63.40" width="1.25" height="1.5" fill="#d4d4d4"/><rect x="612.65" y="63.40" width="1.25" height="1.5" fill="#aadafa"/><rect x="583.90" y="65.90" width="3.75" height="1.5" fill="#679ad1"/><rect x="588.90" y="65.90" width="1.25" height="1.5" fill="#aadafa"/><rect x="591.40" y="65.90" width="1.25" height="1.5" fill="#d4d4d4"/><rect x="593.90" y="65.90" width="1.25" height="1.5" fill="#aadafa"/><rect x="596.40" y="65.90" width="1.25" height="1.5" fill="#d4d4d4"/><rect x="598.90" y="65.90" width="1.25" height="1.5" fill="#bacdab"/><rect x="583.90" y="68.40" width="3.75" height="1.5" fill="#679ad1"/><rect x="588.90" y="68.40" width="1.25" height="1.5" fill="#aadafa"/><rect x="591.40" y="68.40" width="1.25" height="1.5" fill="#d4d4d4"/><rect x="593.90" y="68.40" width="1.25" height="1.5" fill="#cc76d1"/><rect x="588.90" y="70.90" width="1.25" height="1.5" fill="#aadafa"/><rect x="590.15" y="70.90" width="1.25" height="1.5" fill="#d4d4d4"/><rect x="588.90" y="73.40" width="1.25" height="1.5" fill="#aadafa"/><rect x="590.15" y="73.40" width="1.25" height="1.5" fill="#d4d4d4"/><rect x="588.90" y="75.90" width="1.25" height="1.5" fill="#aadafa"/><rect x="590.15" y="75.90" width="1.25" height="1.5" fill="#d4d4d4"/><rect x="592.65" y="75.90" width="1.25" height="1.5" fill="#4a9df8"/><rect x="593.90" y="75.90" width="1.25" height="1.5" fill="#bacdab"/><rect x="595.15" y="75.90" width="1.25" height="1.5" fill="#d4d4d4"/><rect x="597.65" y="75.90" width="1.25" height="1.5" fill="#bacdab"/><rect x="598.90" y="75.90" width="1.25" height="1.5" fill="#4a9df8"/><rect x="600.15" y="75.90" width="1.25" height="1.5" fill="#d4d4d4"/><rect x="583.90" y="78.40" width="1.25" height="1.5" fill="#cc76d1"/><rect x="583.90" y="80.90" width="1.25" height="1.5" fill="#d4d4d4"/><rect x="585.15" y="80.90" width="1.25" height="1.5" fill="#cc76d1"/><rect x="586.40" y="80.90" width="1.25" height="1.5" fill="#aadafa"/><rect x="588.90" y="80.90" width="2.50" height="1.5" fill="#bc89bd"/><rect x="592.65" y="80.90" width="3.75" height="1.5" fill="#71c6b1"/><rect x="596.40" y="80.90" width="1.25" height="1.5" fill="#cc76d1"/><rect x="597.65" y="80.90" width="1.25" height="1.5" fill="#cc76d1"/><rect x="598.90" y="80.90" width="6.25" height="1.5" fill="#c5947c"/><rect x="606.40" y="80.90" width="1.25" height="1.5" fill="#d4d4d4"/><rect x="608.90" y="80.90" width="2.50" height="1.5" fill="#bacdab"/><rect x="611.40" y="80.90" width="1.25" height="1.5" fill="#cc76d1"/><rect x="613.90" y="80.90" width="1.25" height="1.5" fill="#d4d4d4"/><rect x="616.40" y="80.90" width="1.25" height="1.5" fill="#aadafa"/><rect x="583.90" y="83.40" width="2.50" height="1.5" fill="#74985d"/><rect x="587.65" y="83.40" width="1.25" height="1.5" fill="#74985d"/><rect x="588.90" y="83.40" width="3.75" height="1.5" fill="#1e1e1e"/><rect x="592.65" y="83.40" width="5.00" height="1.5" fill="#74985d"/><rect x="598.90" y="83.40" width="2.50" height="1.5" fill="#74985d"/><rect x="602.65" y="83.40" width="11.25" height="1.5" fill="#74985d"/><rect x="615.15" y="83.40" width="2.50" height="1.5" fill="#74985d"/><rect x="618.90" y="83.40" width="8.75" height="1.5" fill="#74985d"/><rect x="628.90" y="83.40" width="2.50" height="1.5" fill="#74985d"/><rect x="632.65" y="83.40" width="6.25" height="1.5" fill="#74985d"/><rect x="583.90" y="85.90" width="8.75" height="1.5" fill="#71c6b1"/><rect x="592.65" y="85.90" width="1.25" height="1.5" fill="#d4d4d4"/><rect x="593.90" y="85.90" width="3.75" height="1.5" fill="#dcdcaf"/><rect x="597.65" y="85.90" width="1.25" height="1.5" fill="#cc76d1"/><rect x="598.90" y="85.90" width="7.50" height="1.5" fill="#c5947c"/><rect x="607.65" y="85.90" width="2.50" height="1.5" fill="#c5947c"/><rect x="610.15" y="85.90" width="1.25" height="1.5" fill="#cc76d1"/><rect x="583.90" y="88.40" width="8.75" height="1.5" fill="#71c6b1"/><rect x="592.65" y="88.40" width="1.25" height="1.5" fill="#d4d4d4"/><rect x="593.90" y="88.40" width="3.75" height="1.5" fill="#dcdcaf"/><rect x="597.65" y="88.40" width="1.25" height="1.5" fill="#cc76d1"/><rect x="598.90" y="88.40" width="3.75" height="1.5" fill="#c5947c"/><rect x="602.65" y="88.40" width="2.50" height="1.5" fill="#679ad1"/><rect x="605.15" y="88.40" width="1.25" height="1.5" fill="#aadafa"/><rect x="606.40" y="88.40" width="1.25" height="1.5" fill="#679ad1"/><rect x="607.65" y="88.40" width="1.25" height="1.5" fill="#70705a"/><rect x="608.90" y="88.40" width="2.50" height="1.5" fill="#c5947c"/><rect x="611.40" y="88.40" width="2.50" height="1.5" fill="#679ad1"/><rect x="613.90" y="88.40" width="1.25" height="1.5" fill="#aadafa"/><rect x="615.15" y="88.40" width="1.25" height="1.5" fill="#679ad1"/><rect x="616.40" y="88.40" width="1.25" height="1.5" fill="#c5947c"/><rect x="617.65" y="88.40" width="1.25" height="1.5" fill="#cc76d1"/><rect x="583.90" y="90.90" width="8.75" height="1.5" fill="#71c6b1"/><rect x="592.65" y="90.90" width="1.25" height="1.5" fill="#d4d4d4"/><rect x="593.90" y="90.90" width="3.75" height="1.5" fill="#dcdcaf"/><rect x="597.65" y="90.90" width="1.25" height="1.5" fill="#cc76d1"/><rect x="598.90" y="90.90" width="8.75" height="1.5" fill="#c5947c"/><rect x="607.65" y="90.90" width="1.25" height="1.5" fill="#cc76d1"/><rect x="583.90" y="95.90" width="3.75" height="1.5" fill="#bc89bd"/><rect x="588.90" y="95.90" width="1.25" height="1.5" fill="#cc76d1"/><rect x="588.90" y="98.40" width="8.75" height="1.5" fill="#71c6b1"/><rect x="597.65" y="98.40" width="1.25" height="1.5" fill="#d4d4d4"/><rect x="598.90" y="98.40" width="3.75" height="1.5" fill="#dcdcaf"/><rect x="602.65" y="98.40" width="1.25" height="1.5" fill="#4a9df8"/><rect x="603.90" y="98.40" width="3.75" height="1.5" fill="#c5947c"/><rect x="607.65" y="98.40" width="1.25" height="1.5" fill="#4a9df8"/><rect x="588.90" y="100.90" width="1.25" height="1.5" fill="#aadafa"/><rect x="590.15" y="100.90" width="1.25" height="1.5" fill="#d4d4d4"/><rect x="591.40" y="100.90" width="1.25" height="1.5" fill="#aadafa"/><rect x="592.65" y="100.90" width="1.25" height="1.5" fill="#d4d4d4"/><rect x="593.90" y="100.90" width="3.75" height="1.5" fill="#dcdcaf"/><rect x="597.65" y="100.90" width="1.25" height="1.5" fill="#4a9df8"/><rect x="598.90" y="100.90" width="1.25" height="1.5" fill="#aadafa"/><rect x="601.40" y="100.90" width="2.50" height="1.5" fill="#679ad1"/><rect x="605.15" y="100.90" width="1.25" height="1.5" fill="#f9d849"/><rect x="593.90" y="103.40" width="8.75" height="1.5" fill="#71c6b1"/><rect x="602.65" y="103.40" width="1.25" height="1.5" fill="#d4d4d4"/><rect x="603.90" y="103.40" width="3.75" height="1.5" fill="#dcdcaf"/><rect x="607.65" y="103.40" width="1.25" height="1.5" fill="#cc76d1"/><rect x="608.90" y="103.40" width="1.25" height="1.5" fill="#aadafa"/><rect x="610.15" y="103.40" width="1.25" height="1.5" fill="#cc76d1"/><rect x="593.90" y="105.90" width="2.50" height="1.5" fill="#74985d"/><rect x="597.65" y="105.90" width="6.25" height="1.5" fill="#74985d"/><rect x="605.15" y="105.90" width="3.75" height="1.5" fill="#74985d"/><rect x="610.15" y="105.90" width="17.50" height="1.5" fill="#74985d"/><rect x="628.90" y="105.90" width="1.25" height="1.5" fill="#74985d"/><rect x="631.40" y="105.90" width="1.25" height="1.5" fill="#74985d"/><rect x="633.90" y="105.90" width="2.50" height="1.5" fill="#74985d"/><rect x="593.90" y="108.40" width="2.50" height="1.5" fill="#74985d"/><rect x="597.65" y="108.40" width="2.50" height="1.5" fill="#74985d"/><rect x="601.40" y="108.40" width="2.50" height="1.5" fill="#74985d"/><rect x="605.15" y="108.40" width="2.50" height="1.5" fill="#74985d"/><rect x="608.90" y="108.40" width="2.50" height="1.5" fill="#74985d"/><rect x="612.65" y="108.40" width="10.00" height="1.5" fill="#74985d"/><rect x="588.90" y="110.90" width="1.25" height="1.5" fill="#f9d849"/><rect x="590.15" y="110.90" width="1.25" height="1.5" fill="#4a9df8"/><rect x="588.90" y="113.40" width="8.75" height="1.5" fill="#71c6b1"/><rect x="597.65" y="113.40" width="1.25" height="1.5" fill="#d4d4d4"/><rect x="598.90" y="113.40" width="3.75" height="1.5" fill="#dcdcaf"/><rect x="602.65" y="113.40" width="1.25" height="1.5" fill="#4a9df8"/><rect x="603.90" y="113.40" width="3.75" height="1.5" fill="#c5947c"/><rect x="607.65" y="113.40" width="1.25" height="1.5" fill="#4a9df8"/><rect x="583.90" y="115.90" width="1.25" height="1.5" fill="#cc76d1"/><rect x="586.40" y="115.90" width="6.25" height="1.5" fill="#bc89bd"/><rect x="593.90" y="115.90" width="1.25" height="1.5" fill="#cc76d1"/><rect x="595.15" y="115.90" width="3.75" height="1.5" fill="#aadafa"/><rect x="598.90" y="115.90" width="1.25" height="1.5" fill="#d4d4d4"/><rect x="601.40" y="115.90" width="3.75" height="1.5" fill="#71c6b1"/><rect x="605.15" y="115.90" width="1.25" height="1.5" fill="#cc76d1"/><rect x="607.65" y="115.90" width="1.25" height="1.5" fill="#cc76d1"/><rect x="588.90" y="118.40" width="8.75" height="1.5" fill="#71c6b1"/><rect x="597.65" y="118.40" width="1.25" height="1.5" fill="#d4d4d4"/><rect x="598.90" y="118.40" width="3.75" height="1.5" fill="#dcdcaf"/><rect x="602.65" y="118.40" width="1.25" height="1.5" fill="#4a9df8"/><rect x="603.90" y="118.40" width="5.00" height="1.5" fill="#c5947c"/><rect x="610.15" y="118.40" width="3.75" height="1.5" fill="#c5947c"/><rect x="613.90" y="118.40" width="1.25" height="1.5" fill="#d4d4d4"/><rect x="616.40" y="118.40" width="3.75" height="1.5" fill="#aadafa"/><rect x="620.15" y="118.40" width="1.25" height="1.5" fill="#4a9df8"/><rect x="588.90" y="120.90" width="3.75" height="1.5" fill="#aadafa"/><rect x="592.65" y="120.90" width="1.25" height="1.5" fill="#d4d4d4"/><rect x="593.90" y="120.90" width="6.25" height="1.5" fill="#dcdcaf"/><rect x="600.15" y="120.90" width="2.50" height="1.5" fill="#4a9df8"/><rect x="583.90" y="123.40" width="1.25" height="1.5" fill="#cc76d1"/><rect x="583.90" y="125.90" width="8.75" height="1.5" fill="#71c6b1"/><rect x="592.65" y="125.90" width="1.25" height="1.5" fill="#d4d4d4"/><rect x="593.90" y="125.90" width="3.75" height="1.5" fill="#dcdcaf"/><rect x="597.65" y="125.90" width="1.25" height="1.5" fill="#cc76d1"/><rect x="598.90" y="125.90" width="6.25" height="1.5" fill="#c5947c"/><rect x="606.40" y="125.90" width="5.00" height="1.5" fill="#c5947c"/><rect x="611.40" y="125.90" width="1.25" height="1.5" fill="#cc76d1"/><rect x="578.90" y="128.40" width="1.25" height="1.5" fill="#f9d849"/><rect x="578.90" y="133.40" width="10.00" height="1.5" fill="#679ad1"/><rect x="590.15" y="133.40" width="6.25" height="1.5" fill="#dcdcaf"/><rect x="596.40" y="133.40" width="2.50" height="1.5" fill="#f9d849"/><rect x="600.15" y="133.40" width="1.25" height="1.5" fill="#f9d849"/><rect x="583.90" y="135.90" width="3.75" height="1.5" fill="#dcdcaf"/><rect x="587.65" y="135.90" width="2.50" height="1.5" fill="#cc76d1"/><rect x="578.90" y="138.40" width="1.25" height="1.5" fill="#f9d849"/><rect x="578.90" y="143.40" width="10.00" height="1.5" fill="#679ad1"/><rect x="590.15" y="143.40" width="10.00" height="1.5" fill="#dcdcaf"/><rect x="600.15" y="143.40" width="2.50" height="1.5" fill="#f9d849"/><rect x="603.90" y="143.40" width="1.25" height="1.5" fill="#f9d849"/><rect x="583.90" y="145.90" width="3.75" height="1.5" fill="#679ad1"/><rect x="588.90" y="145.90" width="1.25" height="1.5" fill="#aadafa"/><rect x="591.40" y="145.90" width="1.25" height="1.5" fill="#d4d4d4"/><rect x="593.90" y="145.90" width="1.25" height="1.5" fill="#bacdab"/><rect x="583.90" y="148.40" width="8.75" height="1.5" fill="#71c6b1"/><rect x="592.65" y="148.40" width="1.25" height="1.5" fill="#d4d4d4"/><rect x="593.90" y="148.40" width="3.75" height="1.5" fill="#dcdcaf"/><rect x="597.65" y="148.40" width="1.25" height="1.5" fill="#cc76d1"/><rect x="598.90" y="148.40" width="1.25" height="1.5" fill="#aadafa"/><rect x="600.15" y="148.40" width="1.25" height="1.5" fill="#cc76d1"/><rect x="583.90" y="150.90" width="2.50" height="1.5" fill="#74985d"/><rect x="587.65" y="150.90" width="7.50" height="1.5" fill="#74985d"/><rect x="596.40" y="150.90" width="7.50" height="1.5" fill="#74985d"/><rect x="583.90" y="153.40" width="8.75" height="1.5" fill="#71c6b1"/><rect x="592.65" y="153.40" width="1.25" height="1.5" fill="#d4d4d4"/><rect x="593.90" y="153.40" width="3.75" height="1.5" fill="#dcdcaf"/><rect x="597.65" y="153.40" width="1.25" height="1.5" fill="#cc76d1"/><rect x="598.90" y="153.40" width="3.75" height="1.5" fill="#c5947c"/><rect x="602.65" y="153.40" width="1.25" height="1.5" fill="#cc76d1"/><rect x="578.90" y="155.90" width="1.25" height="1.5" fill="#f9d849"/><rect x="578.90" y="160.90" width="10.00" height="1.5" fill="#679ad1"/><rect x="590.15" y="160.90" width="10.00" height="1.5" fill="#dcdcaf"/><rect x="600.15" y="160.90" width="2.50" height="1.5" fill="#f9d849"/><rect x="603.90" y="160.90" width="1.25" height="1.5" fill="#f9d849"/><rect x="583.90" y="163.40" width="6.25" height="1.5" fill="#dcdcaf"/><rect x="590.15" y="163.40" width="2.50" height="1.5" fill="#cc76d1"/><rect x="578.90" y="165.90" width="1.25" height="1.5" fill="#f9d849"/><rect x="578.90" y="170.90" width="2.50" height="1.5" fill="#71c6b1"/><rect x="581.40" y="170.90" width="1.25" height="1.5" fill="#d4d4d4"/><rect x="582.65" y="170.90" width="8.75" height="1.5" fill="#dcdcaf"/><rect x="591.40" y="170.90" width="1.25" height="1.5" fill="#f9d849"/><rect x="592.65" y="170.90" width="2.50" height="1.5" fill="#bacdab"/><rect x="595.15" y="170.90" width="1.25" height="1.5" fill="#d4d4d4"/><rect x="597.65" y="170.90" width="2.50" height="1.5" fill="#cc76d1"/><rect x="601.40" y="170.90" width="2.50" height="1.5" fill="#679ad1"/><rect x="605.15" y="170.90" width="1.25" height="1.5" fill="#cc76d1"/><rect x="583.90" y="173.40" width="6.25" height="1.5" fill="#dcdcaf"/><rect x="590.15" y="173.40" width="2.50" height="1.5" fill="#4a9df8"/><rect x="578.90" y="175.90" width="1.25" height="1.5" fill="#cc76d1"/><rect x="580.15" y="175.90" width="1.25" height="1.5" fill="#f9d849"/><rect x="578.90" y="178.40" width="2.50" height="1.5" fill="#74985d"/><rect x="582.65" y="178.40" width="15.00" height="1.5" fill="#74985d"/><rect x="578.90" y="180.90" width="3.75" height="1.5" fill="#dcdcaf"/><rect x="582.65" y="180.90" width="2.50" height="1.5" fill="#f9d849"/><rect x="578.90" y="183.40" width="8.75" height="1.5" fill="#71c6b1"/><rect x="588.90" y="183.40" width="3.75" height="1.5" fill="#dcdcaf"/><rect x="593.90" y="183.40" width="10.00" height="1.5" fill="#c5947c"/><rect x="578.90" y="185.90" width="8.75" height="1.5" fill="#71c6b1"/><rect x="588.90" y="185.90" width="3.75" height="1.5" fill="#dcdcaf"/><rect x="593.90" y="185.90" width="10.00" height="1.5" fill="#c5947c"/><rect x="578.90" y="188.40" width="8.75" height="1.5" fill="#71c6b1"/><rect x="588.90" y="188.40" width="3.75" height="1.5" fill="#dcdcaf"/><rect x="593.90" y="188.40" width="10.00" height="1.5" fill="#c5947c"/></svg>
<div class="abs" style="left:652.5999999999999px;top:53px;width:1px;height:676px;background:#303030"></div>
<div class="abs" style="left:653.4000000000001px;top:163.4px;width:12px;height:1.8px;background:#bdbdbd"></div>
<div class="abs" style="left:653.4000000000001px;top:165.2px;width:12px;height:7.2px;background:#5b5b21"></div></div>
<div id="sim" class="abs"><div class="abs" style="left:0.0px;top:0.0px;width:1.0px;height:729.0px;background:#3c3c3c"></div>
<div class="abs" style="left:1.0px;top:0.0px;width:476.0px;height:25.4px;background:#252526"></div>
<div class="abs" style="left:1.0px;top:0.0px;width:45.0px;height:25.4px;background:#1e1e1e"></div>
<svg class="abs" style="left:12.0px;top:-6.0px" width="21" height="18" viewBox="0 0 21 18"><g fill="#d8d8d8"><rect x="0" y="0" width="21" height="4.4" rx="1.4"/><rect x="0" y="6.2" width="21" height="4.4" rx="1.4"/><rect x="0" y="12.400" width="21" height="4.400" rx="1.400"/></g><g fill="#252526"><circle cx="2.6" cy="2.2" r="1"/><circle cx="2.6" cy="8.4" r="1"/><circle cx="2.6" cy="14.600" r="1"/></g></svg>
<svg class="abs" style="left:41.0px;top:-6.0px" width="6" height="16" viewBox="0 0 6 16"><path d="M5,1 H1 V15 H5" fill="none" stroke="#9a9a9a" stroke-width="1.4"/></svg>
<div class="abs" style="left:45.9px;top:-6.0px;width:223.8px;height:27.7px;background:#333333;box-shadow:0 0 6px rgba(0,0,0,.55);border-radius:2px"></div>
<div class="abs" style="left:61.6px;top:0.6px;width:2.1px;height:2.1px;background:#9a9a9a"></div>
<div class="abs" style="left:61.6px;top:5.4px;width:2.1px;height:2.1px;background:#9a9a9a"></div>
<div class="abs" style="left:66.6px;top:0.6px;width:2.1px;height:2.1px;background:#9a9a9a"></div>
<div class="abs" style="left:66.6px;top:5.4px;width:2.1px;height:2.1px;background:#9a9a9a"></div>
<svg class="abs" style="left:80.0px;top:-8.0px" width="20" height="20" viewBox="0 0 20 20"><path d="M2.2,1 V18" stroke="#86bcf9" stroke-width="1.7"/><path d="M6.4,1.6 L17,9.500 L6.400,17.400 Z" fill="none" stroke="#86bcf9" stroke-width="1.7" stroke-linejoin="round"/></svg>
<svg class="abs" style="left:110.0px;top:-10.0px" width="22" height="22" viewBox="0 0 22 22"><circle cx="11" cy="17.1" r="2.7" fill="#86bcf9"/><path d="M3.400,10.400 a8,8 0 0 1 15.200,0 M19,4.400 V10.700 H13.200" fill="none" stroke="#86bcf9" stroke-width="1.700"/></svg>
<svg class="abs" style="left:143.0px;top:-10.0px" width="22" height="22" viewBox="0 0 22 22"><circle cx="10.4" cy="18" r="2.7" fill="#86bcf9"/><path d="M10.400,0 V13 M5.200,8.400 L10.400,13.400 L15.600,8.400" fill="none" stroke="#86bcf9" stroke-width="1.700"/></svg>
<svg class="abs" style="left:175.0px;top:-10.0px" width="22" height="22" viewBox="0 0 22 22"><circle cx="10.6" cy="18" r="2.7" fill="#86bcf9"/><path d="M10.600,2 V13.600" fill="none" stroke="#86bcf9" stroke-width="1.700"/></svg>
<svg class="abs" style="left:208.0px;top:-10.0px" width="22" height="22" viewBox="0 0 22 22"><path d="M15.800,8.400 a6.500,6.500 0 1 1 -11.600,3.800" fill="none" stroke="#99cf8c" stroke-width="1.700"/></svg>
<svg class="abs" style="left:242.0px;top:-10.0px" width="18" height="20" viewBox="0 0 18 20"><rect x="1.5" y="3" width="14.500" height="15.200" fill="none" stroke="#e58c77" stroke-width="1.600"/></svg>
<div class="abs" style="left:441.6px;top:2.6px;width:2.4px;height:2.4px;border-radius:50%;background:#c5c5c5"></div>
<div class="abs" style="left:448.0px;top:2.6px;width:2.4px;height:2.4px;border-radius:50%;background:#c5c5c5"></div>
<div class="abs" style="left:454.4px;top:2.6px;width:2.4px;height:2.4px;border-radius:50%;background:#c5c5c5"></div>
<div class="abs" style="left:5.0px;top:54.4px;width:20.0px;height:2.1px;background:#5a5a5a"></div>
<svg class="abs" style="left:44.0px;top:45.0px" width="32" height="22" viewBox="0 0 32 22"><g fill="#707070"><path d="M4.2,0.800 H28.400 V3.400 H6.800 V15.800 H4.200 Z"/><rect x="0.800" y="17.200" width="17.600" height="3.200"/><path d="M21,5.600 h9.800 v14.800 h-9.800 Z M23.200,8.200 v9.600 h5.400 v-9.600 Z" fill-rule="evenodd"/></g></svg>
<svg class="abs" style="left:100.8px;top:46.5px" width="18" height="18" viewBox="0 0 18 18"><path d="M9,0.200 V17.800 M0.200,9 H17.800" stroke="#fff" stroke-width="2.500"/></svg>
<svg class="abs" style="left:151.4px;top:47.2px" width="16.6" height="16.6" viewBox="0 0 16.6 16.6"><path d="M0.800,0.800 L15.800,15.800 M15.800,0.800 L0.800,15.800" stroke="#fff" stroke-width="2.300"/></svg>
<div class="t" style="left:200.2px;top:53.6px;transform:translateY(-50%);font-size:20px;color:#ececec;letter-spacing:.17px">Simulators</div>
<div class="abs" style="left:307.6px;top:54.4px;width:163.0px;height:2.1px;background:#5a5a5a"></div>
<div class="abs" style="left:5.1px;top:90.7px;width:228.6px;height:196.0px;background:#1e1e1e;border-radius:5px;box-shadow:0 1.5px 2px rgba(0,0,0,.45)"></div>
<svg class="abs" style="left:30.0px;top:121.0px" width="32" height="22" viewBox="0 0 32 22"><rect x="5.400" y="2.600" width="21.400" height="12.400" fill="none" stroke="#fff" stroke-width="2.600"/><rect x="1" y="18.100" width="30" height="2.500" fill="#fff"/></svg>
<div class="t" style="left:87.9px;top:132.0px;transform:translateY(-50%);font-size:17.2px;color:#e2e2e2;letter-spacing:-.45px">KQ35</div>
<svg class="abs" style="left:194.2px;top:118.3px" width="17" height="17" viewBox="0 0 17 17"><path d="M0.900,0.900 L16.100,16.100 M16.100,0.900 L0.900,16.100" stroke="#fff" stroke-width="2.400"/></svg>
<svg class="abs" style="left:58.0px;top:166.5px" width="17" height="32" viewBox="0 0 17 32"><path d="M3.400,5 a3.600,3.600 0 0 1 7.200,0 V20.200 a5.600,5.600 0 1 1 -7.200,0 Z" fill="none" stroke="#e6e6e6" stroke-width="1.500"/><path d="M7,7 V22" stroke="#e6e6e6" stroke-width="1.600"/><circle cx="7" cy="25" r="2.700" fill="#e6e6e6"/><path d="M12.400,6.400 h3.400 M12.400,9.800 h3.400 M12.400,13.200 h3.400 M12.400,16.600 h3.400" stroke="#bdbdbd" stroke-width="1.400"/></svg>
<div class="t" style="left:88.3px;top:180.8px;transform:translateY(-50%);font-size:49.600px;color:#f4f4f4;letter-spacing:-3px;-webkit-text-stroke:.95px #1e1e1e">22</div>
<div class="t" style="left:141.0px;top:170.0px;transform:translateY(-50%);font-size:14.600px;color:#e6e6e6">°C</div>
<div class="t" style="left:140.8px;top:200.4px;transform:translateY(-50%);font-size:15.600px;color:#e6e6e6">±0.25</div>
<div class="abs" style="left:58.1px;top:228.3px;width:122.5px;height:6.2px;background:#6f6133;border-radius:3.100px"></div>
<div class="abs" style="left:58.1px;top:228.0px;width:48.0px;height:6.8px;background:#e9c55c;border-radius:3.400px"></div>
<div class="abs" style="left:93.1px;top:219.1px;width:24.4px;height:24.4px;background:#e9c55c;border-radius:50%;box-shadow:0 1px 3px rgba(0,0,0,.5)"></div>
<div class="abs" style="left:5.0px;top:314.7px;width:20.0px;height:1.4px;background:#8a8a8a"></div>
<div class="t" style="left:35.2px;top:315.4px;transform:translateY(-50%);font-size:20px;color:#ececec;letter-spacing:-.1px">Devices</div>
<div class="abs" style="left:115.8px;top:314.7px;width:355.0px;height:1.4px;background:#8a8a8a"></div>
<div class="abs" style="left:5.0px;top:343.0px;width:468.2px;height:310.2px;background:#1e1e1e;border-radius:5px;box-shadow:0 1.5px 2px rgba(0,0,0,.45)"></div>
<svg class="abs" style="left:40.8px;top:381.0px" width="31" height="26" viewBox="0 0 31 26"><g fill="#8a8a8a"><rect x="0" y="0" width="31" height="6.600" rx="2"/><rect x="0" y="9.300" width="31" height="6.600" rx="2"/><rect x="0" y="18.600" width="27" height="6.600" rx="2"/></g><g fill="#1e1e1e"><circle cx="3.600" cy="3.300" r="1.500"/><circle cx="3.600" cy="12.600" r="1.500"/><circle cx="3.600" cy="21.900" r="1.500"/></g></svg>
<div class="t" style="left:112.7px;top:382.1px;transform:translateY(-50%);font-size:17.200px;color:#f0f0f0">II24</div>
<div class="t" style="left:112.7px;top:406.6px;transform:translateY(-50%);font-size:15.200px;color:#adadad;letter-spacing:.33px">DeviceScript Simulator (WASM)</div>
<svg class="abs" style="left:110.2px;top:432.0px" width="22" height="22" viewBox="0 0 22 22"><g fill="none" stroke="#6e6e6e" stroke-width="1.500"><rect x="4" y="4" width="14" height="14" rx="1.500"/><rect x="8.200" y="8.200" width="5.600" height="5.600"/><path d="M7.600,0.500 V4 M14.400,0.500 V4 M7.600,18 V21.500 M14.400,18 V21.500 M0.500,7.600 H4 M0.500,14.400 H4 M18,7.600 H21.500 M18,14.400 H21.500"/></g></svg>
<svg class="abs" style="left:185.4px;top:431.6px" width="30.2" height="30.2" viewBox="0 0 24 24"><path fill="#fff" d="M3 17.250V21h3.750L17.810 9.940l-3.750-3.750L3 17.250zM20.710 7.040c.390-.390.390-1.020 0-1.410l-2.340-2.340c-.390-.390-1.020-.390-1.410 0l-1.830 1.830 3.750 3.750 1.830-1.830z"/></svg>
<div class="abs" style="left:106.2px;top:467.7px;width:116.3px;height:45.6px;border:1.300px solid #4f7a47;border-radius:4.500px"></div>
<div class="abs" style="left:127.3px;top:484.2px;width:12.7px;height:12.7px;background:#7cc576"></div>
<div class="t" style="left:155.8px;top:490.4px;transform:translateY(-50%);font-size:16.800px;color:#7cc576;font-weight:bold;letter-spacing:.25px;-webkit-text-stroke:.35px #1e1e1e">STOP</div>
<div class="abs" style="left:242.7px;top:481.3px;width:41.1px;height:17.4px;background:#8a7637;border-radius:8.700px"></div>
<div class="abs" style="left:263.9px;top:477.7px;width:24.6px;height:24.6px;background:#e9c55c;border-radius:50%;box-shadow:0 1px 3px rgba(0,0,0,.5)"></div>
<div class="t" style="left:300.4px;top:489.4px;transform:translateY(-50%);font-size:20px;color:#f0f0f0;letter-spacing:.1px">enabled</div>
<svg class="abs" style="left:248.8px;top:541.0px" width="30" height="21" viewBox="0 0 30 21"><path d="M7.600,19.500 a6,6 0 0 1 -0.800,-11.900 a8.200,8.200 0 0 1 15.800,1.600 a5.200,5.200 0 0 1 0.600,10.300 Z" fill="none" stroke="#6e6e6e" stroke-width="1.700"/></svg>
<svg class="abs" style="left:385.9px;top:539.3px" width="30.2" height="30.2" viewBox="0 0 24 24"><path fill="#fff" d="M3 17.250V21h3.750L17.810 9.940l-3.750-3.750L3 17.250zM20.710 7.040c.390-.390.390-1.020 0-1.410l-2.340-2.340c-.390-.390-1.020-.390-1.410 0l-1.830 1.830 3.750 3.750 1.830-1.830z"/></svg>
<div class="abs" style="left:40.4px;top:568.0px;width:123.4px;height:40.0px;background:#3b3b3b;border-radius:20px"></div>
<div class="t" style="left:55.8px;top:588.4px;transform:translateY(-50%);font-size:16.200px;color:#f2f2f2;letter-spacing:.12px">messages: 0</div>
<svg class="abs" style="left:184.2px;top:578.3px" width="29.4" height="29.4" viewBox="0 0 24 24"><path fill="#fff" d="M19.140 12.940c.040-.300.060-.610.060-.940 0-.320-.020-.640-.070-.940l2.030-1.580c.180-.140.230-.410.120-.610l-1.920-3.320c-.120-.220-.370-.290-.590-.220l-2.390.960c-.500-.380-1.030-.700-1.620-.940l-.360-2.540c-.040-.240-.240-.410-.480-.410h-3.840c-.240 0-.430.170-.470.410l-.360 2.540c-.590.240-1.130.570-1.620.940l-2.390-.960c-.220-.080-.470 0-.590.220L2.740 8.870c-.120.210-.080.470.120.610l2.030 1.580c-.050.300-.090.630-.090.940s.020.640.070.940l-2.030 1.580c-.180.140-.230.410-.120.610l1.920 3.320c.120.220.370.290.590.220l2.390-.960c.500.380 1.030.700 1.620.940l.360 2.540c.050.240.240.410.480.410h3.840c.240 0 .440-.170.470-.410l.360-2.540c.590-.240 1.130-.560 1.620-.940l2.390.960c.220.080.470 0 .590-.220l1.920-3.320c.120-.220.070-.470-.120-.610l-2.010-1.580zM12 15.600c-1.980 0-3.600-1.620-3.600-3.600s1.620-3.600 3.600-3.600 3.600 1.620 3.600 3.600-1.620 3.600-3.600 3.600z"/></svg>
<div class="abs" style="left:247.3px;top:590.8px;width:45.0px;height:17.4px;background:#5b5b5b;border-radius:8.700px"></div>
<div class="abs" style="left:246.2px;top:587.3px;width:24.6px;height:24.6px;background:#e2e2e2;border-radius:50%;box-shadow:0 1px 3px rgba(0,0,0,.5)"></div>
<div class="t" style="left:307.7px;top:599.2px;transform:translateY(-50%);font-size:20px;color:#f0f0f0;letter-spacing:.25px">connected</div></div>
<div id="right" class="abs"><svg class="abs" style="left:14.5px;top:-7.0px" width="21" height="18" viewBox="0 0 21 18"><g fill="#e4e4e4"><rect x="0" y="0" width="21" height="4.400" rx="1.400"/><rect x="0" y="6.200" width="21" height="4.400" rx="1.400"/><rect x="0" y="12.400" width="21" height="4.400" rx="1.400"/></g><g fill="#252526"><circle cx="2.600" cy="2.200" r="1"/><circle cx="2.600" cy="8.400" r="1"/><circle cx="2.600" cy="14.600" r="1"/></g></svg>
<div class="abs" style="left:12.5px;top:18.8px;width:24.7px;height:1.5px;background:#e0e0e0"></div>
<svg class="abs" style="left:344.2px;top:-1.6px" width="12" height="12" viewBox="0 0 12 12"><path d="M1,1 L11,11 M11,1 L1,11" stroke="#c5c5c5" stroke-width="1.300"/></svg>
<svg class="abs" style="left:5.0px;top:35.3px" width="14" height="10" viewBox="-7 -5 14 10"><path d="M-5.600,-2.900 L0,2.900 L5.600,-2.900" fill="none" stroke="#c5c5c5" stroke-width="1.350"/></svg>
<div class="t" style="left:25.0px;top:40.1px;transform:translateY(-50%);font-size:13.6px;color:#d0d0d0;letter-spacing:0.165px;font-weight:bold;">DEVICES</div>
<div class="abs" style="left:0.0px;top:53.2px;width:372.0px;height:26.9px;background:#37373d"></div>
<svg class="abs" style="left:19.1px;top:60.4px" width="10" height="14" viewBox="-5 -7 10 14"><path d="M-2.900,-5.600 L2.900,0 L-2.900,5.600" fill="none" stroke="#c5c5c5" stroke-width="1.350"/></svg>
<svg class="abs" style="left:42.2px;top:58.2px" width="18" height="18" viewBox="0 0 18 18"><g fill="none" stroke="#d6d6d6" stroke-width="1.100"><rect x="0.600" y="0.600" width="16.800" height="16.800" rx="0.800"/><circle cx="5.400" cy="5" r="1.700"/><circle cx="12.400" cy="7.800" r="1.700"/><circle cx="10.200" cy="13.400" r="1.700"/><path d="M7.100,5 H12.400 V6.100 M10.700,7.800 H4 V13.400 H8.500 M11.900,13.400 H14.400"/></g></svg>
<div class="t" style="left:68.6px;top:67.2px;transform:translateY(-50%);font-size:16.3px;color:#e4e4e4;letter-spacing:0.347px;">II24 (simulator)</div>
<div class="t" style="left:190.7px;top:67.6px;transform:translateY(-50%);font-size:14.7px;color:#a8a8a8;letter-spacing:0.488px;">devicescriptdebug...</div>
<svg class="abs" style="left:340.6px;top:61.9px" width="11" height="11" viewBox="0 0 11 11"><path d="M0.800,0.800 L10.200,10.200 M10.200,0.800 L0.800,10.200" stroke="#c5c5c5" stroke-width="1.300"/></svg>
<svg class="abs" style="left:19.1px;top:88.0px" width="10" height="14" viewBox="-5 -7 10 14"><path d="M-2.900,-5.600 L2.900,0 L-2.900,5.600" fill="none" stroke="#c5c5c5" stroke-width="1.350"/></svg>
<svg class="abs" style="left:42.2px;top:85.8px" width="18" height="18" viewBox="0 0 18 18"><g fill="none" stroke="#c5c5c5" stroke-width="1.100"><rect x="0.600" y="0.600" width="16.800" height="16.800" rx="0.800"/><circle cx="5.400" cy="5" r="1.700"/><circle cx="12.400" cy="7.800" r="1.700"/><circle cx="10.200" cy="13.400" r="1.700"/><path d="M7.100,5 H12.400 V6.100 M10.700,7.800 H4 V13.400 H8.500 M11.900,13.400 H14.400"/></g></svg>
<div class="t" style="left:68.6px;top:94.8px;transform:translateY(-50%);font-size:16.3px;color:#d4d4d4;letter-spacing:0.073px;">KQ35</div>
<div class="t" style="left:118.6px;top:95.2px;transform:translateY(-50%);font-size:14.7px;color:#a0a0a0;letter-spacing:0.445px;">temperature</div>
<div class="abs" style="left:0.0px;top:252.4px;width:372.0px;height:1.0px;background:#3e3e3f"></div>
<svg class="abs" style="left:5.0px;top:262.6px" width="14" height="10" viewBox="-7 -5 14 10"><path d="M-5.600,-2.900 L0,2.900 L5.600,-2.900" fill="none" stroke="#c5c5c5" stroke-width="1.350"/></svg>
<div class="t" style="left:25.0px;top:267.3px;transform:translateY(-50%);font-size:13.6px;color:#d0d0d0;letter-spacing:0.638px;font-weight:bold;">WATCH</div>
<svg class="abs" style="left:14.4px;top:285.0px" width="18" height="18" viewBox="0 0 18 18"><path d="M5.800,0.500 V17.500 M12.200,0.500 V17.500 M0.500,5.800 H17.500 M0.500,12.200 H17.500" stroke="#c5c5c5" stroke-width="1.200" fill="none"/></svg>
<div class="t" style="left:41.6px;top:293.8px;transform:translateY(-50%);font-size:16.3px;color:#d4d4d4;letter-spacing:0.330px;">KQ35.temperature.temperature</div>
<div class="t" style="left:285.1px;top:294.4px;transform:translateY(-50%);font-size:14.7px;color:#a0a0a0;letter-spacing:0.236px;">21.592°C</div>
<div class="abs" style="left:0.0px;top:1124.4px;width:372.0px;height:1.0px;background:#3e3e3f"></div>
<svg class="abs" style="left:7.4px;top:1131.5px" width="10" height="14" viewBox="-5 -7 10 14"><path d="M-2.900,-5.600 L2.900,0 L-2.900,5.600" fill="none" stroke="#c5c5c5" stroke-width="1.350"/></svg>
<div class="t" style="left:25.5px;top:1138.7px;transform:translateY(-50%);font-size:13.6px;color:#d0d0d0;letter-spacing:0.037px;font-weight:bold;">CLOUD</div></div>
<div id="panel" class="abs"><div class="t" style="left:25.0px;top:22.9px;transform:translateY(-50%);font-size:13.6px;color:#969696;letter-spacing:-0.197px;">PROBLEMS</div>
<div class="t" style="left:130.0px;top:22.9px;transform:translateY(-50%);font-size:13.6px;color:#969696;letter-spacing:0.119px;">OUTPUT</div>
<div class="t" style="left:217.3px;top:22.9px;transform:translateY(-50%);font-size:13.6px;color:#969696;letter-spacing:-0.046px;">DEBUG CONSOLE</div>
<div class="t" style="left:365.4px;top:22.9px;transform:translateY(-50%);font-size:13.6px;color:#e7e7e7;letter-spacing:-0.052px;">TERMINAL</div>
<div class="t" style="left:464.6px;top:22.9px;transform:translateY(-50%);font-size:13.6px;color:#969696;letter-spacing:-0.073px;">AZURE</div>
<div class="abs" style="left:362.3px;top:37.5px;width:75.0px;height:1.1px;background:#d8d8d8"></div>
<svg class="abs" style="left:1039.5px;top:14.0px" width="15" height="15" viewBox="0 0 15 15"><path d="M7.500,0 V15 M0,7.500 H15" stroke="#c5c5c5" stroke-width="1.300"/></svg>
<svg class="abs" style="left:1063.5px;top:19.5px" width="10" height="6" viewBox="0 0 10 6"><path d="M0.800,0.800 L5,5 L9.200,0.800" fill="none" stroke="#c5c5c5" stroke-width="1.200"/></svg>
<svg class="abs" style="left:1090.5px;top:17.0px" width="13" height="8" viewBox="0 0 13 8"><path d="M0.800,7.200 L6.500,1.200 L12.200,7.200" fill="none" stroke="#c5c5c5" stroke-width="1.300"/></svg>
<svg class="abs" style="left:1118.2px;top:16.0px" width="11.4" height="11.4" viewBox="0 0 11.4 11.4"><path d="M0.800,0.800 L10.600,10.600 M10.600,0.800 L0.800,10.600" stroke="#c5c5c5" stroke-width="1.300"/></svg>
<div class="abs" style="left:962.0px;top:42.6px;width:1.0px;height:380.0px;background:#3c3c3c"></div>
<svg class="abs" style="left:976.5px;top:47.4px" width="18" height="18" viewBox="0 0 18 18"><rect x="0.700" y="0.700" width="16.600" height="16.600" rx="1.600" fill="none" stroke="#c5c5c5" stroke-width="1.200"/><path d="M6,5 L10,9 L6,13" fill="none" stroke="#c5c5c5" stroke-width="1.200"/></svg>
<div class="t" style="left:1000.4px;top:56.9px;transform:translateY(-50%);font-size:16.3px;color:#cccccc;letter-spacing:0.368px;">zsh</div>
<div class="abs" style="left:963.0px;top:70.0px;width:184.0px;height:27.0px;background:#37373d"></div>
<svg class="abs" style="left:976.0px;top:76.8px" width="19.5" height="14" viewBox="0 0 19.5 14"><g fill="#e0e0e0"><rect x="0" y="0" width="19.500" height="3.600" rx="1.200"/><rect x="0" y="5" width="19.500" height="3.600" rx="1.200"/><rect x="0" y="10" width="19.500" height="3.600" rx="1.200"/></g><g fill="#37373d"><circle cx="2.200" cy="1.800" r="0.900"/><circle cx="2.200" cy="6.800" r="0.900"/><circle cx="2.200" cy="11.800" r="0.900"/></g></svg>
<div class="t" style="left:1000.4px;top:84.1px;transform:translateY(-50%);font-size:16.3px;color:#e4e4e4;letter-spacing:0.356px;">DeviceScript</div>
<div class="abs" style="left:949.6px;top:285.0px;width:12.6px;height:137.0px;background:#424242"></div>
<div class="t mono" style="left:25px;top:60.50px;transform:translateY(-50%);font-size:14.500px;letter-spacing:0px"><span style="color:#cccccc">VM&gt; </span><span style="color:#c07acb">ex</span></div>
<div class="t mono" style="left:25px;top:77.97px;transform:translateY(-50%);font-size:14.500px;letter-spacing:0px"><span style="color:#cccccc">VM&gt; </span><span style="color:#c07acb">1</span></div>
<div class="t mono" style="left:25px;top:95.44px;transform:translateY(-50%);font-size:14.500px;letter-spacing:0px"><span style="color:#cccccc">VM&gt; </span><span style="color:#c07acb">ex</span></div>
<div class="t mono" style="left:25px;top:112.91px;transform:translateY(-50%);font-size:14.500px;letter-spacing:0px"><span style="color:#cccccc">VM&gt; </span><span style="color:#c07acb">1</span></div>
<div class="t mono" style="left:25px;top:130.38px;transform:translateY(-50%);font-size:14.500px;letter-spacing:0px"><span style="color:#cccccc">VM&gt; </span><span style="color:#c07acb">ex</span></div>
<div class="t mono" style="left:25px;top:147.85px;transform:translateY(-50%);font-size:14.500px;letter-spacing:0px"><span style="color:#cccccc">VM&gt; </span><span style="color:#c07acb">1</span></div>
<div class="t mono" style="left:25px;top:165.32px;transform:translateY(-50%);font-size:14.500px;letter-spacing:0px"><span style="color:#cccccc">VM&gt; </span><span style="color:#c07acb">ex</span></div>
<div class="t mono" style="left:25px;top:182.79px;transform:translateY(-50%);font-size:14.500px;letter-spacing:0px"><span style="color:#cccccc">VM&gt; </span><span style="color:#c07acb">1</span></div>
<div class="t mono" style="left:25px;top:200.26px;transform:translateY(-50%);font-size:14.500px;letter-spacing:0px"><span style="color:#cccccc">VM&gt; </span><span style="color:#c07acb">ex</span></div>
<div class="t mono" style="left:25px;top:217.73px;transform:translateY(-50%);font-size:14.500px;letter-spacing:0px"><span style="color:#cccccc">VM&gt; </span><span style="color:#c07acb">1</span></div>
<div class="t mono" style="left:25px;top:235.20px;transform:translateY(-50%);font-size:14.500px;letter-spacing:0px"><span style="color:#cccccc">VM&gt; </span><span style="color:#c07acb">ex</span></div>
<div class="t mono" style="left:25px;top:252.67px;transform:translateY(-50%);font-size:14.500px;letter-spacing:0px"><span style="color:#cccccc">VM&gt; </span><span style="color:#c07acb">1</span></div>
<div class="t mono" style="left:25px;top:270.14px;transform:translateY(-50%);font-size:14.500px;letter-spacing:0px"><span style="color:#cccccc">VM&gt; </span><span style="color:#c07acb">ex</span></div>
<div class="t mono" style="left:25px;top:287.61px;transform:translateY(-50%);font-size:14.500px;letter-spacing:0px"><span style="color:#cccccc">VM&gt; </span><span style="color:#c07acb">1</span></div>
<div class="t mono" style="left:25px;top:305.08px;transform:translateY(-50%);font-size:14.500px;letter-spacing:0px"><span style="color:#cccccc">got debug server connection</span></div>
<div class="t mono" style="left:25px;top:322.55px;transform:translateY(-50%);font-size:14.500px;letter-spacing:0px"><span style="color:#cccccc">VM&gt; </span><span style="color:#c07acb">ex</span></div>
<div class="t mono" style="left:25px;top:340.02px;transform:translateY(-50%);font-size:14.500px;letter-spacing:0px"><span style="color:#cccccc">VM&gt; </span><span style="color:#c07acb">1</span></div>
<div class="t mono" style="left:25px;top:357.49px;transform:translateY(-50%);font-size:14.500px;letter-spacing:0px"><span style="color:#cccccc">VM&gt; </span><span style="color:#e8e864">DeviceScript Simulator (WASM) v5.0.0; file v5.0.0</span></div>
<div class="t mono" style="left:25px;top:374.96px;transform:translateY(-50%);font-size:14.500px;letter-spacing:0px"><span style="color:#cccccc">VM&gt; </span><span style="color:#c07acb">1</span></div>
<div class="t mono" style="left:25px;top:392.43px;transform:translateY(-50%);font-size:14.500px;letter-spacing:0px"><span style="color:#cccccc">VM&gt; </span><span style="color:#c07acb">hello 1</span></div>
<div class="abs" style="left:25.4px;top:401.6px;width:8.4px;height:17.4px;background:#c4c4c4"></div></div>
<div id="status" class="abs"><div class="abs" style="left:0.0px;top:0.6px;width:37.7px;height:28.0px;background:#528165"></div>
<svg class="abs" style="left:11.0px;top:5.6px" width="13" height="16" viewBox="0 0 13 16"><path d="M10.700,0.900 L6.300,5.900 L10.700,10.900 M1.400,5.300 L5.800,10.300 L1.400,15.300" fill="none" stroke="#fff" stroke-width="1.300"/></svg>
<svg class="abs" style="left:48.6px;top:4.2px" width="14" height="18" viewBox="0 0 14 18"><g fill="none" stroke="#fff" stroke-width="1.300"><circle cx="3.400" cy="3.600" r="2.300"/><circle cx="10.800" cy="5.600" r="2.300"/><circle cx="3.400" cy="15.400" r="2.300"/><path d="M3.400,6 V13 M10.800,8 C10.800,11 4,10 3.600,13"/></g></svg>
<div class="t" style="left:70.4px;top:7.7px;font-size:15.9px;color:#fff;letter-spacing:-0.387px">main*</div>
<svg class="abs" style="left:131.5px;top:4.8px" width="17" height="17" viewBox="0 0 17 17"><g fill="none" stroke="#fff" stroke-width="1.300"><path d="M2,8.500 a6.500,6.500 0 0 1 11.500,-4.200 M15,8.500 a6.500,6.500 0 0 1 -11.500,4.200"/><path d="M13.800,0.800 V4.600 H10 M3.200,16.200 V12.400 H7"/></g></svg>
<svg class="abs" style="left:169.0px;top:5.1px" width="16" height="16" viewBox="0 0 16 16"><g fill="none" stroke="#fff" stroke-width="1.300"><circle cx="8" cy="8" r="7"/><path d="M5.200,5.200 L10.800,10.800 M10.800,5.200 L5.200,10.800"/></g></svg>
<div class="t" style="left:191.0px;top:7.7px;font-size:15.9px;color:#fff;letter-spacing:0.158px">0</div>
<svg class="abs" style="left:204.5px;top:4.8px" width="16" height="16" viewBox="0 0 16 16"><g fill="none" stroke="#fff" stroke-width="1.300"><path d="M8,1.200 L15.200,14.800 H0.800 Z" stroke-linejoin="round"/><path d="M8,6 V10.400"/></g></svg>
<div class="t" style="left:225.6px;top:7.7px;font-size:15.9px;color:#fff;letter-spacing:-0.042px">0</div>
<svg class="abs" style="left:256.0px;top:4.8px" width="16" height="16" viewBox="0 0 16 16"><g fill="none" stroke="#fff" stroke-width="1.300"><path d="M6,13 V1.500 L15,8 L10,11.600"/><circle cx="4.600" cy="13" r="3"/></g></svg>
<div class="t" style="left:276.4px;top:7.7px;font-size:15.9px;color:#fff;letter-spacing:0.019px">Devicescript: Launch (samplepri)</div>
<svg class="abs" style="left:530.0px;top:4.3px" width="16" height="16" viewBox="0 0 16 16"><g fill="none" stroke="#fff" stroke-width="1.300"><path d="M1,10 C1.500,5 5,3.500 9.500,3.600 V0.800 L15.200,5.600 L9.500,10.200 V7.400 C6,7.200 4,8 3,10.500"/><circle cx="6.600" cy="12.600" r="2.600"/></g></svg>
<div class="t" style="left:551.0px;top:7.7px;font-size:15.9px;color:#fff;letter-spacing:-0.445px">Live Share</div>
<div class="t" style="left:644.7px;top:7.7px;font-size:15.9px;color:#fff;letter-spacing:0.120px">960 bytes</div>
<svg class="abs" style="left:758.8px;top:7.5px" width="15.5" height="14" viewBox="0 0 15.5 14"><g fill="#fff"><rect x="0" y="0" width="15.500" height="3.400" rx="1"/><rect x="0" y="4.800" width="15.500" height="3.400" rx="1"/><rect x="0" y="9.600" width="15.500" height="3.400" rx="1"/></g></svg>
<div class="t" style="left:780.4px;top:7.7px;font-size:15.9px;color:#fff;letter-spacing:-0.031px">DeviceScript</div>
<svg class="abs" style="left:877.9px;top:5.4px" width="11" height="14" viewBox="0 0 11 14"><path d="M1,1 L10,7.400 L1,13.800 Z" fill="none" stroke="#fff" stroke-width="1.300" stroke-linejoin="round"/></svg>
<div class="t" style="left:898.0px;top:7.7px;font-size:15.9px;color:#fff;letter-spacing:-0.839px">II24</div>
<svg class="abs" style="left:928.6px;top:4.4px" width="16" height="16" viewBox="0 0 16 16"><g fill="none" stroke="#fff" stroke-width="1.100"><rect x="0.600" y="0.600" width="14.800" height="14.800" rx="0.800"/><circle cx="4.800" cy="4.600" r="1.500"/><circle cx="11" cy="7" r="1.500"/><circle cx="9" cy="12" r="1.500"/><path d="M6.300,4.600 H11 V5.500 M9.500,7 H3.600 V12 H7.500"/></g></svg>
<div class="t" style="left:949.7px;top:7.7px;font-size:15.9px;color:#fff;letter-spacing:-0.142px">2</div>
<div class="t" style="left:977.6px;top:7.7px;font-size:15.9px;color:#fff;letter-spacing:-0.035px">Ln 15, Col 33 (28 selected)</div>
<div class="t" style="left:1188.7px;top:7.7px;font-size:15.9px;color:#fff;letter-spacing:-0.238px">Spaces: 4</div>
<div class="t" style="left:1279.0px;top:7.7px;font-size:15.9px;color:#fff;letter-spacing:-0.160px">UTF-8</div>
<div class="t" style="left:1344.5px;top:7.7px;font-size:15.9px;color:#fff;letter-spacing:-2.053px">LF</div>
<div class="t" style="left:1381.0px;top:7.7px;font-size:15px;color:#fff;letter-spacing:3.678px">{}</div>
<div class="t" style="left:1403.8px;top:7.7px;font-size:15.9px;color:#fff;letter-spacing:0.010px">TypeScript</div>
<svg class="abs" style="left:1501.0px;top:6.5px" width="15" height="16" viewBox="0 0 15 16"><g fill="none" stroke="#fff" stroke-width="1.200"><circle cx="7.500" cy="7" r="2.200"/><path d="M3.200,11.800 a6.400,6.400 0 1 1 8.600,0 M7.500,9.200 V16"/></g></svg>
<div class="t" style="left:1521.9px;top:7.7px;font-size:15.9px;color:#fff;letter-spacing:-0.615px">Go Live</div>
<div class="t" style="left:1594.7px;top:7.7px;font-size:15.9px;color:#fff;letter-spacing:-0.062px">960 B</div>
<svg class="abs" style="left:1657.5px;top:4.8px" width="15" height="15" viewBox="0 0 15 15"><g fill="none" stroke="#fff" stroke-width="1.200"><path d="M7.500,1.200 L14.200,13.800 H0.800 Z" stroke-linejoin="round"/><path d="M7.500,5.600 V9.800"/></g></svg>
<div class="t" style="left:1677.6px;top:7.7px;font-size:15.9px;color:#fff;letter-spacing:-0.552px">1 Spell</div>
<svg class="abs" style="left:1744.0px;top:8.2px" width="18" height="12" viewBox="0 0 18 12"><path d="M0.800,6.500 L4.800,10.500 L13,1 M7.600,9 L9.200,10.500 L17.200,1" fill="none" stroke="#fff" stroke-width="1.200"/></svg>
<div class="t" style="left:1766.6px;top:7.7px;font-size:15.9px;color:#fff;letter-spacing:-0.006px">Prettier</div>
<svg class="abs" style="left:1839.4px;top:7.0px" width="17" height="15" viewBox="0 0 17 15"><g fill="none" stroke="#fff" stroke-width="1.200"><path d="M6,1 H16 V8 H13"/><circle cx="7" cy="8" r="2.600"/><path d="M1.500,15 C2,11.500 12,11.500 12.500,15"/></g></svg>
<svg class="abs" style="left:1877.0px;top:6.8px" width="15" height="16" viewBox="0 0 15 16"><path d="M7.500,1 C3.500,1 3,5 3,8 C3,11 1.500,12 1,13.500 H14 C13.500,12 12,11 12,8 C12,5 11.500,1 7.500,1 Z" fill="none" stroke="#fff" stroke-width="1.200"/></svg></div>
<!-- annotation rectangles -->
<svg class="abs" style="left:0;top:0;z-index:50" width="1910" height="1170" viewBox="0 0 1910 1170" fill="none" stroke="#ea3323"><rect x="42.3" y="11.9" width="322.75" height="351.60" stroke-width="6.7"/><rect x="431.5" y="276.35" width="584.85" height="180.60" stroke-width="6.7"/><rect x="1057.9" y="25.8" width="367.60" height="257.85" stroke-width="6.65"/><rect x="1534.2" y="-20" width="405.80" height="348.30" stroke-width="6.9"/><rect x="382.1" y="1012.95" width="624.80" height="129.40" stroke-width="6.55"/></svg>
</div>
</body>
</html>
